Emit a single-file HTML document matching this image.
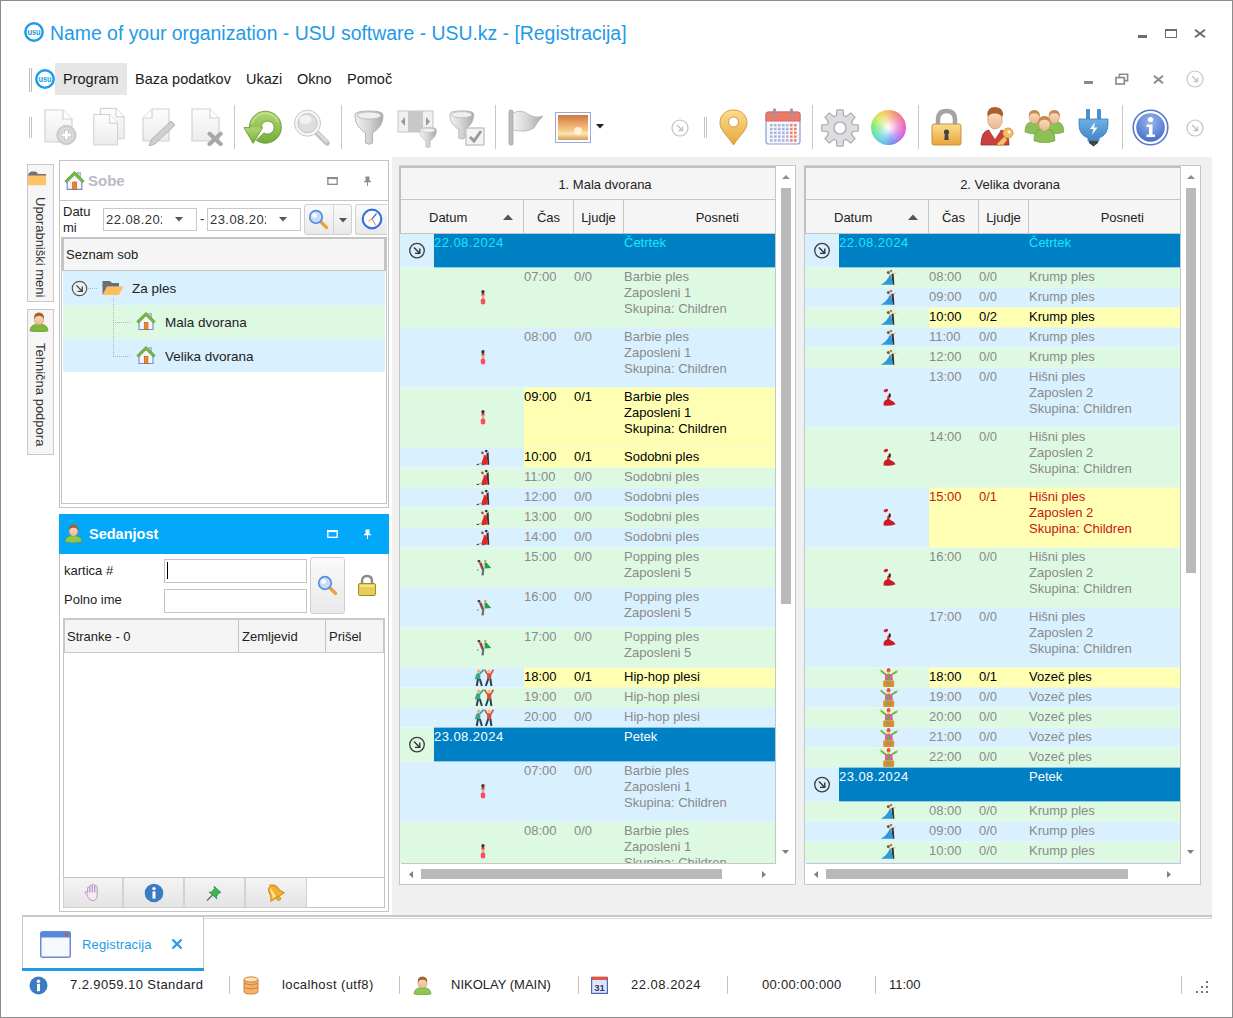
<!DOCTYPE html><html><head><meta charset="utf-8"><title>Registracija</title><style>
*{box-sizing:border-box;margin:0;padding:0}
html,body{width:1233px;height:1018px;overflow:hidden;background:#fff}
body{position:relative;font-family:"Liberation Sans",sans-serif;font-size:13px;color:#222;}
.a{position:absolute}
.t{position:absolute;white-space:nowrap;line-height:16px}
.frame{left:0;top:0;width:1233px;height:1018px;border:1px solid #8c8c8c}
.title{left:50px;top:21px;font-size:19.4px;line-height:24px;color:#1e9be6}
.menu{font-size:14.5px;line-height:18px;top:70px;color:#1a1a1a}
.sep{width:1px;background:#c9c9c9}
.hdr{background:#f5f5f5}
.gl{background:#c6c6c6}
.rowg{background:#def9e2}
.rowb{background:#d9f0ff}
.yel{background:#ffffb4}
.grp{background:#0080c4}
.gray{color:#8a8a8a}
.blk{color:#000}
.red{color:#c81414}
.cy{color:#19e6ff}
.wh{color:#fff}
</style></head><body>
<div class="a frame"></div>
<svg class="a" style="left:24px;top:22px" width="20" height="20" viewBox="0 0 20 20"><circle cx="10.0" cy="10.0" r="8.7" fill="#fff" stroke="#1e9be6" stroke-width="2.4"/><text x="10.0" y="12.6" font-family="Liberation Sans,sans-serif" font-size="8.8" font-weight="bold" fill="#1e9be6" text-anchor="middle" textLength="13.200000000000001" lengthAdjust="spacingAndGlyphs">usu</text></svg>
<div class="t title" style="left:50px;top:21px;">Name of your organization - USU software - USU.kz - [Registracija]</div>
<div class="a " style="left:1138px;top:35px;width:9px;height:3px;background:#6c6c6c"></div>
<div class="a " style="left:1165px;top:29px;width:12px;height:9px;border:1.6px solid #6c6c6c;border-top-width:2.4px"></div>
<svg class="a" style="left:1194px;top:29px" width="12" height="9" viewBox="0 0 12 9"><path d="M1 0.8 L11 8.2 M11 0.8 L1 8.2" stroke="#6c6c6c" stroke-width="2"/></svg>
<div class="a " style="left:29px;top:68px;width:1px;height:24px;background:#bdbdbd"></div>
<div class="a " style="left:31px;top:68px;width:1px;height:24px;background:#bdbdbd"></div>
<svg class="a" style="left:35px;top:69px" width="20" height="20" viewBox="0 0 20 20"><circle cx="10.0" cy="10.0" r="8.7" fill="#fff" stroke="#1e9be6" stroke-width="2.4"/><text x="10.0" y="12.6" font-family="Liberation Sans,sans-serif" font-size="8.8" font-weight="bold" fill="#1e9be6" text-anchor="middle" textLength="13.200000000000001" lengthAdjust="spacingAndGlyphs">usu</text></svg>
<div class="a " style="left:55px;top:63px;width:72px;height:32px;background:#e6e6e6"></div>
<div class="t menu" style="left:63px;top:70px;">Program</div>
<div class="t menu" style="left:135px;top:70px;">Baza podatkov</div>
<div class="t menu" style="left:246px;top:70px;">Ukazi</div>
<div class="t menu" style="left:297px;top:70px;">Okno</div>
<div class="t menu" style="left:347px;top:70px;">Pomoč</div>
<div class="a " style="left:1084px;top:81px;width:9px;height:3px;background:#8a8a8a"></div>
<svg class="a" style="left:1115px;top:73px" width="14" height="12" viewBox="0 0 14 12"><path d="M4.5 4 V1.2 H12.6 V7.6 H9.5" fill="none" stroke="#8a8a8a" stroke-width="1.6"/><rect x="0.9" y="4.6" width="8.4" height="6.4" fill="#fff" stroke="#8a8a8a" stroke-width="1.6"/></svg>
<svg class="a" style="left:1153px;top:75px" width="11" height="9" viewBox="0 0 11 9"><path d="M1 0.8 L10 8.2 M10 0.8 L1 8.2" stroke="#8a8a8a" stroke-width="1.9"/></svg>
<svg class="a" style="left:1186px;top:70px" width="18" height="18" viewBox="0 0 18 18"><circle cx="9" cy="9" r="8" fill="none" stroke="#c4c4c4" stroke-width="1.2"/><path d="M6 6 L11.5 11.5 M11.5 7.5 V11.5 H7.5" fill="none" stroke="#c4c4c4" stroke-width="1.3"/></svg>
<div class="a " style="left:29px;top:117px;width:1px;height:21px;background:#c4c4c4"></div>
<div class="a " style="left:31px;top:117px;width:1px;height:21px;background:#c4c4c4"></div>
<svg class="a" width="0" height="0" style="left:0;top:0"><defs>
<linearGradient id="gDoc" x1="0" y1="0" x2="0" y2="1"><stop offset="0" stop-color="#fdfdfd"/><stop offset="1" stop-color="#ececec"/></linearGradient>
<linearGradient id="gSil" x1="0" y1="0" x2="1" y2="0"><stop offset="0" stop-color="#f2f2f2"/><stop offset="0.5" stop-color="#d4d4d4"/><stop offset="1" stop-color="#a8a8a8"/></linearGradient>
<linearGradient id="gGreen" x1="0" y1="0" x2="0" y2="1"><stop offset="0" stop-color="#b2d874"/><stop offset="1" stop-color="#74ac38"/></linearGradient>
<linearGradient id="gGold" x1="0" y1="0" x2="0" y2="1"><stop offset="0" stop-color="#fbdc8e"/><stop offset="1" stop-color="#e8a63c"/></linearGradient>
<linearGradient id="gSun" x1="0" y1="0" x2="0" y2="1"><stop offset="0" stop-color="#d4783c"/><stop offset="0.6" stop-color="#f6c886"/><stop offset="0.75" stop-color="#fbe6b0"/><stop offset="1" stop-color="#d89a5c"/></linearGradient>
<radialGradient id="gInfo" cx="0.5" cy="0.3" r="0.8"><stop offset="0" stop-color="#9ab8ee"/><stop offset="1" stop-color="#3a62c4"/></radialGradient>
<linearGradient id="gBlue" x1="0" y1="0" x2="0" y2="1"><stop offset="0" stop-color="#6fb0e4"/><stop offset="1" stop-color="#3f86c6"/></linearGradient>
<radialGradient id="gWheelW" cx="0.5" cy="0.5" r="0.5"><stop offset="0" stop-color="#fff" stop-opacity="1"/><stop offset="0.55" stop-color="#fff" stop-opacity="0.35"/><stop offset="1" stop-color="#fff" stop-opacity="0"/></radialGradient>
<linearGradient id="gSkin" x1="0" y1="0" x2="0" y2="1"><stop offset="0" stop-color="#fbe0c4"/><stop offset="1" stop-color="#eab890"/></linearGradient>
</defs></svg>
<svg class="a" style="left:43px;top:109px" width="36" height="36" viewBox="0 0 36 36"><path d="M2 1 H20 L29 10 V33 H2 Z" fill="url(#gDoc)" stroke="#d2d2d2" stroke-width="1.2"/><path d="M20 1 V10 H29" fill="#fff" stroke="#d2d2d2" stroke-width="1.2"/><circle cx="23.4" cy="26" r="9.5" fill="#d2d2d2" stroke="#c0c0c0"/><circle cx="23.4" cy="26" r="7.4" fill="#dcdcdc"/><path d="M23.4 20.8 V31.2 M18.2 26 H28.6" stroke="#b8b8b8" stroke-width="4.4"/><path d="M23.4 21.4 V30.6 M18.8 26 H28" stroke="#fff" stroke-width="3"/></svg>
<svg class="a" style="left:92px;top:107px" width="34" height="39" viewBox="0 0 34 39"><g transform="translate(6.6,0.4) scale(0.88,0.95)"><path d="M2 1 H20 L29 10 V33 H2 Z" fill="url(#gDoc)" stroke="#d2d2d2" stroke-width="1.2"/><path d="M20 1 V10 H29" fill="#fff" stroke="#d2d2d2" stroke-width="1.2"/></g><g transform="translate(0,6.6) scale(0.88,0.95)"><path d="M2 1 H20 L29 10 V33 H2 Z" fill="url(#gDoc)" stroke="#d2d2d2" stroke-width="1.2"/><path d="M20 1 V10 H29" fill="#fff" stroke="#d2d2d2" stroke-width="1.2"/></g></svg>
<svg class="a" style="left:141px;top:108px" width="36" height="38" viewBox="0 0 36 38"><path d="M2 10 L11 1 H28 V33 H2 Z" fill="url(#gDoc)" stroke="#d2d2d2" stroke-width="1.2"/><path d="M11 1 V10 H2" fill="#fff" stroke="#d2d2d2" stroke-width="1.2"/><path d="M30 13 L34 17 L14 36 L8 38 L10 32 Z" fill="#cfcfcf" stroke="#b4b4b4" stroke-width="1"/></svg>
<svg class="a" style="left:190px;top:108px" width="36" height="38" viewBox="0 0 36 38"><path d="M2 1 H20 L29 10 V33 H2 Z" fill="url(#gDoc)" stroke="#d2d2d2" stroke-width="1.2"/><path d="M20 1 V10 H29" fill="#fff" stroke="#d2d2d2" stroke-width="1.2"/><path d="M19.6 25.8 L30.6 36 M30.6 25.8 L19.6 36" stroke="#a8a8a8" stroke-width="4.2" stroke-linecap="round"/></svg>
<div class="a sep" style="left:234px;top:105px;width:1px;height:44px;"></div>
<svg class="a" style="left:243px;top:110px" width="40" height="36" viewBox="0 0 40 36"><path d="M6.4 17.2 A16 16 0 1 1 13.2 30.3 L21 22.9 A6.5 6.5 0 1 0 18.2 17.6 Z" fill="url(#gGreen)" stroke="#6a9c38" stroke-width="0.9"/><path d="M9 14 A13.6 13.6 0 0 1 35 12" fill="none" stroke="#c8e498" stroke-width="1.6" opacity="0.8"/><path d="M0.9 17.6 H19.6 L10.1 33.4 Z" fill="url(#gGreen)" stroke="#6a9c38" stroke-width="0.9"/><path d="M7 17.4 H17.6" stroke="#a4cc64" stroke-width="1.5"/></svg>
<svg class="a" style="left:293px;top:109px" width="38" height="38" viewBox="0 0 38 38"><path d="M24 24 L34 34" stroke="#c2c2c2" stroke-width="5.4" stroke-linecap="round"/><path d="M24.5 23.5 L33.5 32.5" stroke="#e2e2e2" stroke-width="1.8" stroke-linecap="round"/><circle cx="14.5" cy="14.2" r="13" fill="#f7f7f7" stroke="#c8c8c8" stroke-width="1"/><circle cx="14.5" cy="14.2" r="9.6" fill="#dedede" stroke="#c2c2c2" stroke-width="1"/><ellipse cx="12.4" cy="10.6" rx="6" ry="4.4" fill="#f2f2f2"/></svg>
<div class="a sep" style="left:341px;top:105px;width:1px;height:44px;"></div>
<svg class="a" style="left:354px;top:110px" width="31" height="37" viewBox="0 0 31 37"><path d="M1 5 Q1 1 15 1 Q29 1 29 5 C29 15 24 19 18.5 23 V33 Q15 35.5 11.5 33 V23 C6 19 1 15 1 5 Z" fill="url(#gSil)" stroke="#b2b2b2" stroke-width="1"/><ellipse cx="15" cy="5.5" rx="12" ry="3.6" fill="#efefef" stroke="#bdbdbd"/></svg>
<svg class="a" style="left:397px;top:110px" width="42" height="38" viewBox="0 0 42 38"><rect x="1" y="1" width="35" height="21" fill="#f0f0f0" stroke="#c4c4c4"/><rect x="11" y="1" width="15" height="21" fill="#c8c8c8"/><path d="M8 7 V16 L4 11.5 Z M29 7 V16 L33 11.5 Z" fill="#9a9a9a"/><g transform="translate(22,17) scale(0.6)"><path d="M1 5 Q1 1 15 1 Q29 1 29 5 C29 15 24 19 18.5 23 V33 Q15 35.5 11.5 33 V23 C6 19 1 15 1 5 Z" fill="url(#gSil)" stroke="#b2b2b2" stroke-width="1"/><ellipse cx="15" cy="5.5" rx="12" ry="3.6" fill="#efefef" stroke="#bdbdbd"/></g></svg>
<svg class="a" style="left:449px;top:110px" width="38" height="38" viewBox="0 0 38 38"><g transform="scale(0.85)"><path d="M1 5 Q1 1 15 1 Q29 1 29 5 C29 15 24 19 18.5 23 V33 Q15 35.5 11.5 33 V23 C6 19 1 15 1 5 Z" fill="url(#gSil)" stroke="#b2b2b2" stroke-width="1"/><ellipse cx="15" cy="5.5" rx="12" ry="3.6" fill="#efefef" stroke="#bdbdbd"/></g><rect x="17" y="18" width="18" height="17" fill="#f4f4f4" stroke="#b9b9b9" stroke-width="1.2"/><path d="M21 27 L25 31 L32 21" fill="none" stroke="#9a9a9a" stroke-width="3"/></svg>
<div class="a sep" style="left:495px;top:105px;width:1px;height:44px;"></div>
<svg class="a" style="left:507px;top:109px" width="38" height="38" viewBox="0 0 38 38"><rect x="2" y="1" width="4" height="35" rx="1.5" fill="#bdbdbd" stroke="#a4a4a4" stroke-width="0.8"/><path d="M6 4 Q14 0 21 5 Q28 10 36 7 Q30 13 27 19 Q20 24 6 21 Z" fill="url(#gSil)" stroke="#b4b4b4" stroke-width="0.8"/></svg>
<svg class="a" style="left:555px;top:112px" width="36" height="31" viewBox="0 0 36 31"><rect x="0.5" y="0.5" width="35" height="30" fill="#fff" stroke="#9aa8d8"/><rect x="3" y="3" width="30" height="25" fill="url(#gSun)"/><circle cx="23" cy="19" r="4" fill="#fff6d8" opacity="0.9"/></svg>
<svg class="a" style="left:596px;top:124px" width="8" height="5" viewBox="0 0 8 5"><path d="M0 0 H8 L4 4.5 Z" fill="#222"/></svg>
<svg class="a" style="left:671px;top:119px" width="18" height="18" viewBox="0 0 18 18"><circle cx="9" cy="9" r="8" fill="none" stroke="#c0c0c0" stroke-width="1.2"/><path d="M6 6 L11.5 11.5 M11.5 7.5 V11.5 H7.5" fill="none" stroke="#c0c0c0" stroke-width="1.3"/></svg>
<div class="a " style="left:704px;top:117px;width:1px;height:21px;background:#c4c4c4"></div>
<div class="a " style="left:706px;top:117px;width:1px;height:21px;background:#c4c4c4"></div>
<svg class="a" style="left:719px;top:109px" width="30" height="37" viewBox="0 0 30 37"><path d="M14.5 1 C6 1 1 7 1 14 C1 21 8 26 14.5 36 C21 26 28 21 28 14 C28 7 23 1 14.5 1 Z" fill="url(#gGold)" stroke="#d69a3c" stroke-width="1"/><circle cx="14.5" cy="13" r="5" fill="#fff" stroke="#d69a3c"/></svg>
<svg class="a" style="left:765px;top:108px" width="36" height="38" viewBox="0 0 36 38"><rect x="1" y="4" width="34" height="32" rx="2.5" fill="#f7f8fc" stroke="#8d9bd0" stroke-width="1.2"/><path d="M1 13 V6.5 Q1 4 3.5 4 H32.5 Q35 4 35 6.5 V13 Z" fill="#ec7a6c" stroke="#d46a5c"/><rect x="8" y="0.5" width="3" height="8" rx="1" fill="#9a9a9a"/><rect x="25" y="0.5" width="3" height="8" rx="1" fill="#9a9a9a"/><rect x="5" y="16.0" width="2.6" height="2.4" fill="#a8b4dc"/><rect x="9" y="16.0" width="2.6" height="2.4" fill="#a8b4dc"/><rect x="13" y="16.0" width="2.6" height="2.4" fill="#a8b4dc"/><rect x="17" y="16.0" width="2.6" height="2.4" fill="#a8b4dc"/><rect x="21" y="16.0" width="2.6" height="2.4" fill="#a8b4dc"/><rect x="25" y="16.0" width="2.6" height="2.4" fill="#f08060"/><rect x="29" y="16.0" width="2.6" height="2.4" fill="#f08060"/><rect x="5" y="19.8" width="2.6" height="2.4" fill="#a8b4dc"/><rect x="9" y="19.8" width="2.6" height="2.4" fill="#a8b4dc"/><rect x="13" y="19.8" width="2.6" height="2.4" fill="#a8b4dc"/><rect x="17" y="19.8" width="2.6" height="2.4" fill="#a8b4dc"/><rect x="21" y="19.8" width="2.6" height="2.4" fill="#a8b4dc"/><rect x="25" y="19.8" width="2.6" height="2.4" fill="#f08060"/><rect x="29" y="19.8" width="2.6" height="2.4" fill="#f08060"/><rect x="5" y="23.6" width="2.6" height="2.4" fill="#a8b4dc"/><rect x="9" y="23.6" width="2.6" height="2.4" fill="#a8b4dc"/><rect x="13" y="23.6" width="2.6" height="2.4" fill="#a8b4dc"/><rect x="17" y="23.6" width="2.6" height="2.4" fill="#a8b4dc"/><rect x="21" y="23.6" width="2.6" height="2.4" fill="#a8b4dc"/><rect x="25" y="23.6" width="2.6" height="2.4" fill="#f08060"/><rect x="29" y="23.6" width="2.6" height="2.4" fill="#f08060"/><rect x="5" y="27.4" width="2.6" height="2.4" fill="#a8b4dc"/><rect x="9" y="27.4" width="2.6" height="2.4" fill="#a8b4dc"/><rect x="13" y="27.4" width="2.6" height="2.4" fill="#a8b4dc"/><rect x="17" y="27.4" width="2.6" height="2.4" fill="#a8b4dc"/><rect x="21" y="27.4" width="2.6" height="2.4" fill="#a8b4dc"/><rect x="25" y="27.4" width="2.6" height="2.4" fill="#f08060"/><rect x="29" y="27.4" width="2.6" height="2.4" fill="#f08060"/><rect x="5" y="31.2" width="2.6" height="2.4" fill="#a8b4dc"/><rect x="9" y="31.2" width="2.6" height="2.4" fill="#a8b4dc"/><rect x="13" y="31.2" width="2.6" height="2.4" fill="#a8b4dc"/><rect x="17" y="31.2" width="2.6" height="2.4" fill="#a8b4dc"/><rect x="21" y="31.2" width="2.6" height="2.4" fill="#a8b4dc"/><rect x="25" y="31.2" width="2.6" height="2.4" fill="#f08060"/><rect x="29" y="31.2" width="2.6" height="2.4" fill="#f08060"/></svg>
<div class="a sep" style="left:812px;top:105px;width:1px;height:44px;"></div>
<svg class="a" style="left:821px;top:109px" width="38" height="38" viewBox="0 0 38 38"><polygon points="31.7,15.5 37.2,15.9 37.2,22.1 31.7,22.5 30.5,25.5 34.1,29.7 29.7,34.1 25.5,30.5 22.5,31.7 22.1,37.2 15.9,37.2 15.5,31.7 12.5,30.5 8.3,34.1 3.9,29.7 7.5,25.5 6.3,22.5 0.8,22.1 0.8,15.9 6.3,15.5 7.5,12.5 3.9,8.3 8.3,3.9 12.5,7.5 15.5,6.3 15.9,0.8 22.1,0.8 22.5,6.3 25.5,7.5 29.7,3.9 34.1,8.3 30.5,12.5" fill="#dcdce0" stroke="#acacb2" stroke-width="1.2" stroke-linejoin="round"/><circle cx="19" cy="19" r="6" fill="#fff" stroke="#a6a6ac" stroke-width="1.2"/></svg>
<div class="a" style="left:871px;top:110px;width:35px;height:35px;border-radius:50%;background:conic-gradient(from 60deg,#f06aa0,#e85ac8,#b46ae8,#6a8cf0,#5ac8e8,#5ae0b0,#7ae86a,#d4e85a,#f0c85a,#f08a6a,#f06aa0)"></div>
<svg class="a" style="left:871px;top:110px" width="35" height="35" viewBox="0 0 35 35"><circle cx="17.5" cy="17.5" r="17.5" fill="url(#gWheelW)"/></svg>
<div class="a sep" style="left:918px;top:105px;width:1px;height:44px;"></div>
<svg class="a" style="left:931px;top:108px" width="32" height="38" viewBox="0 0 32 38"><path d="M7 18 V12 Q7 3 15.5 3 Q24 3 24 12 V18" fill="none" stroke="#a4a4a8" stroke-width="4.5"/><rect x="1" y="16" width="29" height="21" rx="2" fill="url(#gGold)" stroke="#c8903c"/><circle cx="15.5" cy="24" r="2.6" fill="#444"/><path d="M14 25 L13.3 32 H17.7 L17 25 Z" fill="#444"/></svg>
<svg class="a" style="left:978px;top:107px" width="38" height="40" viewBox="0 0 38 40"><path d="M3 38 Q3 24 11 23 L17 30 L23 23 Q31 24 31 38 Z" fill="#c84040" stroke="#983030" stroke-width="0.8"/><path d="M11 23 L17 32 L23 23 L17 27 Z" fill="#fff"/><path d="M9 9 Q9 0 17 0 Q26 0 25 10 Q24 5 17 5 Q10 5 9 9 Z" fill="#a8602c"/><ellipse cx="17" cy="13" rx="7.2" ry="9" fill="url(#gSkin)" stroke="#c8946a" stroke-width="0.7"/><path d="M9.5 10 Q10 2 17 2 Q24 2 24.5 10 Q21 6 17 6.5 Q12 6 9.5 10 Z" fill="#a8602c"/><circle cx="30" cy="26" r="5" fill="#f4c060" stroke="#d69a3c"/><circle cx="31" cy="25" r="1.5" fill="#fff"/><path d="M26.5 29.5 L19 37 L21 39 L23 37 L24.5 38.5 L29 33" fill="#f4c060" stroke="#d69a3c" stroke-width="0.8"/></svg>
<svg class="a" style="left:1024px;top:110px" width="42" height="34" viewBox="0 0 42 34"><g transform="translate(1,0) scale(0.85)"><path d="M0 26 Q0 15 7 14 H15 Q22 15 22 26 Q11 30 0 26 Z" fill="#8cc054" stroke="#6a9a3c" stroke-width="0.8"/><ellipse cx="11" cy="8.5" rx="6" ry="7.5" fill="url(#gSkin)" stroke="#c8946a" stroke-width="0.7"/><path d="M4.5 8 Q4 0 11 0 Q18 0 17.5 8 Q15 3.5 11 4 Q7 3.5 4.5 8 Z" fill="#c88a4c"/></g><g transform="translate(21,0) scale(0.85)"><path d="M0 26 Q0 15 7 14 H15 Q22 15 22 26 Q11 30 0 26 Z" fill="#8cc054" stroke="#6a9a3c" stroke-width="0.8"/><ellipse cx="11" cy="8.5" rx="6" ry="7.5" fill="url(#gSkin)" stroke="#c8946a" stroke-width="0.7"/><path d="M4.5 8 Q4 0 11 0 Q18 0 17.5 8 Q15 3.5 11 4 Q7 3.5 4.5 8 Z" fill="#c88a4c"/></g><g transform="translate(10,6) scale(0.95)"><path d="M0 26 Q0 15 7 14 H15 Q22 15 22 26 Q11 30 0 26 Z" fill="#8cc054" stroke="#6a9a3c" stroke-width="0.8"/><ellipse cx="11" cy="8.5" rx="6" ry="7.5" fill="url(#gSkin)" stroke="#c8946a" stroke-width="0.7"/><path d="M4.5 8 Q4 0 11 0 Q18 0 17.5 8 Q15 3.5 11 4 Q7 3.5 4.5 8 Z" fill="#c88a4c"/></g></svg>
<svg class="a" style="left:1078px;top:108px" width="32" height="40" viewBox="0 0 32 40"><rect x="8" y="1" width="4" height="12" rx="1" fill="#4a90cc"/><rect x="19" y="1" width="4" height="12" rx="1" fill="#4a90cc"/><path d="M1 11 H30 V16 Q30 27 21 30 V33 H10 V30 Q1 27 1 16 Z" fill="url(#gBlue)" stroke="#3a78b4" stroke-width="0.8"/><path d="M17 14 L12 21 H15.5 L14 27 L19.5 19.5 H16 Z" fill="#fff"/><path d="M11 33 H20 V35 L15.5 38.5 L11 35 Z" fill="#444"/></svg>
<div class="a sep" style="left:1122px;top:105px;width:1px;height:44px;"></div>
<svg class="a" style="left:1132px;top:109px" width="37" height="37" viewBox="0 0 37 37"><circle cx="18.5" cy="18.5" r="17.3" fill="#fff" stroke="#5a78c8" stroke-width="1.6"/><circle cx="18.5" cy="18.5" r="14.3" fill="url(#gInfo)"/><circle cx="18.5" cy="10.5" r="2.6" fill="#fff"/><path d="M14.5 15.5 H20.5 V25.5 H23 V28 H14.5 V25.5 H17 V18 H14.5 Z" fill="#fff"/></svg>
<svg class="a" style="left:1186px;top:119px" width="18" height="18" viewBox="0 0 18 18"><circle cx="9" cy="9" r="8" fill="none" stroke="#c0c0c0" stroke-width="1.2"/><path d="M6 6 L11.5 11.5 M11.5 7.5 V11.5 H7.5" fill="none" stroke="#c0c0c0" stroke-width="1.3"/></svg>
<div class="a " style="left:27px;top:164px;width:27px;height:138px;background:#f6f6f6;border:1px solid #c8c8c8"></div>
<div class="t" style="left:49px;top:197px;transform-origin:0 0;transform:rotate(90deg);font-size:13px;line-height:18px;color:#333">Uporabniški meni</div>
<svg class="a" style="left:28px;top:171px" width="19" height="15" viewBox="0 0 19 15"><path d="M0 4 Q1 0.5 4 0.5 H7 Q9 0.5 10 3 H18 V6 H0 Z" fill="#737373"/><rect x="0" y="4.5" width="18" height="9.8" fill="#ffc266"/></svg>
<div class="a " style="left:27px;top:309px;width:27px;height:146px;background:#f6f6f6;border:1px solid #c8c8c8"></div>
<div class="t" style="left:49px;top:343px;transform-origin:0 0;transform:rotate(90deg);font-size:13px;line-height:18px;color:#333">Tehnična podpora</div>
<svg class="a" style="left:29px;top:312px" width="20" height="20" viewBox="0 0 20 20"><path d="M1 19 Q1 12 10 12 Q19 12 19 19 Q10 21 1 19 Z" fill="#7cb83c" stroke="#5a9028" stroke-width="0.6"/><ellipse cx="10" cy="7.5" rx="4.6" ry="5.6" fill="url(#gSkin)" stroke="#c08a5a" stroke-width="0.6"/><path d="M5 7 Q4.5 0.5 10 0.5 Q15.5 0.5 15 7 Q13 3.5 10 4 Q7 3.5 5 7 Z" fill="#a8602c"/></svg>
<div class="a " style="left:59px;top:160px;width:330px;height:348px;background:#fff;border:1px solid #c4c4c4"></div>
<div class="a " style="left:60px;top:200px;width:328px;height:1px;background:#c4c4c4"></div>
<svg class="a" style="left:64px;top:170px" width="21" height="21" viewBox="0 0 20 20"><path d="M3 9 V18.5 H17 V9 L10 3 Z" fill="#f4f4fa" stroke="#7a88c8" stroke-width="1.1"/><rect x="13" y="2.5" width="2.6" height="5" fill="#c8cce4" stroke="#8a96c8" stroke-width="0.6"/><rect x="8.3" y="11.5" width="3.6" height="7" fill="#e8892c" stroke="#b46414" stroke-width="0.7"/><path d="M0.8 10.6 L10 1.4 L19.2 10.6 L17.4 12 L10 4.8 L2.6 12 Z" fill="#74bc3c" stroke="#4f9424" stroke-width="0.7"/></svg>
<div class="t " style="left:88px;top:172px;font-weight:bold;font-size:15px;line-height:18px;color:#b9bcc6">Sobe</div>
<svg class="a" style="left:327px;top:177px" width="11" height="8" viewBox="0 0 12 9"><rect x="0.75" y="0.75" width="10.5" height="7.5" fill="none" stroke="#8c8c8c" stroke-width="1.5"/><rect x="0" y="0" width="12" height="2.4" fill="#8c8c8c"/></svg>
<svg class="a" style="left:363px;top:176px" width="9" height="11" viewBox="0 0 9 11"><path d="M2.5 0.5 H6.5 V5 H8 V6.2 H5 V10 H4 V6.2 H1 V5 H2.5 Z" fill="#8c8c8c"/></svg>
<div class="t " style="left:63px;top:204px;line-height:15px">Datu</div>
<div class="t " style="left:63px;top:220px;line-height:15px">mi</div>
<div class="a " style="left:103px;top:208px;width:94px;height:23px;background:#fff;border:1px solid #c9c9c9"></div>
<div class="a" style="left:106px;top:211px;width:56px;height:18px;overflow:hidden"><div class="t" style="left:0;top:1px;color:#333;letter-spacing:0.45px">22.08.2024</div></div>
<svg class="a" style="left:175px;top:217px" width="8" height="5" viewBox="0 0 8 5"><path d="M0 0 H8 L4 4.5 Z" fill="#555"/></svg>
<div class="t " style="left:200px;top:211px;">-</div>
<div class="a " style="left:207px;top:208px;width:94px;height:23px;background:#fff;border:1px solid #c9c9c9"></div>
<div class="a" style="left:210px;top:211px;width:56px;height:18px;overflow:hidden"><div class="t" style="left:0;top:1px;color:#333;letter-spacing:0.45px">23.08.2024</div></div>
<svg class="a" style="left:279px;top:217px" width="8" height="5" viewBox="0 0 8 5"><path d="M0 0 H8 L4 4.5 Z" fill="#555"/></svg>
<div class="a " style="left:304px;top:204px;width:48px;height:31px;background:linear-gradient(#fafafa,#e9e9e9);border:1px solid #d0d0d0;border-radius:3px"></div>
<div class="a " style="left:333px;top:205px;width:1px;height:29px;background:#d4d4d4"></div>
<svg class="a" style="left:308px;top:209px" width="21" height="21" viewBox="0 0 21 21"><path d="M12 12 L18.5 18.5" stroke="#e8a43c" stroke-width="3.4" stroke-linecap="round"/><circle cx="8" cy="8" r="6.3" fill="#c4dcfa" stroke="#5a8ce0" stroke-width="1.7"/><circle cx="6.5" cy="6.3" r="2.6" fill="#fff" opacity="0.8"/></svg>
<svg class="a" style="left:339px;top:218px" width="8" height="5" viewBox="0 0 8 5"><path d="M0 0 H8 L4 4.5 Z" fill="#555"/></svg>
<div class="a " style="left:355px;top:204px;width:32px;height:31px;background:linear-gradient(#fafafa,#e9e9e9);border:1px solid #d0d0d0;border-radius:3px;border-right:none;border-radius:3px 0 0 3px"></div>
<svg class="a" style="left:361px;top:208px" width="22" height="22" viewBox="0 0 22 22"><circle cx="11" cy="11" r="9.3" fill="#fff" stroke="#3a72d8" stroke-width="2.2"/><path d="M11 11 L15.5 5.5" stroke="#3a72d8" stroke-width="1.2"/><path d="M11 11 L14.5 17 M11 11 L7.5 13" stroke="#e87a5a" stroke-width="1"/></svg>
<div class="a " style="left:61px;top:237px;width:326px;height:267px;background:#fff;border:1px solid #c4c4c4"></div>
<div class="a " style="left:62px;top:238px;width:324px;height:33px;background:#f5f5f5;border:1px solid #c4c4c4;border-width:1px 2px 1px 2px"></div>
<div class="t " style="left:66px;top:247px;">Seznam sob</div>
<div class="a rowb" style="left:63px;top:271px;width:322px;height:34px;"></div>
<div class="a rowg" style="left:63px;top:305px;width:322px;height:34px;"></div>
<div class="a rowb" style="left:63px;top:339px;width:322px;height:33px;"></div>
<svg class="a" style="left:71px;top:280px" width="17" height="17" viewBox="0 0 17 17"><circle cx="8.5" cy="8.5" r="7.2" fill="#e8f4fc" stroke="#555" stroke-width="1.2"/><path d="M5.4 5.4 L11 11 M11.3 6.6 V11.3 H6.6" fill="none" stroke="#444" stroke-width="1.3"/></svg>
<svg class="a" style="left:102px;top:280px" width="22" height="16" viewBox="0 0 22 16"><path d="M0.5 1 H8 L10 3 H17 V6 H0.5 Z" fill="#6e6e6e"/><path d="M0.5 5 V15 H17 L21.5 6.5 H5 L0.5 15" fill="#ffbe5c"/><path d="M0.5 5 V15 L5 6.5 H17 V5 Z" fill="#6e6e6e"/></svg>
<div class="t " style="left:132px;top:281px;font-size:13.5px">Za ples</div>
<svg class="a" style="left:136px;top:311px" width="20" height="20" viewBox="0 0 20 20"><path d="M3 9 V18.5 H17 V9 L10 3 Z" fill="#f4f4fa" stroke="#7a88c8" stroke-width="1.1"/><rect x="13" y="2.5" width="2.6" height="5" fill="#c8cce4" stroke="#8a96c8" stroke-width="0.6"/><rect x="8.3" y="11.5" width="3.6" height="7" fill="#e8892c" stroke="#b46414" stroke-width="0.7"/><path d="M0.8 10.6 L10 1.4 L19.2 10.6 L17.4 12 L10 4.8 L2.6 12 Z" fill="#74bc3c" stroke="#4f9424" stroke-width="0.7"/></svg>
<div class="t " style="left:165px;top:315px;font-size:13.5px">Mala dvorana</div>
<svg class="a" style="left:136px;top:345px" width="20" height="20" viewBox="0 0 20 20"><path d="M3 9 V18.5 H17 V9 L10 3 Z" fill="#f4f4fa" stroke="#7a88c8" stroke-width="1.1"/><rect x="13" y="2.5" width="2.6" height="5" fill="#c8cce4" stroke="#8a96c8" stroke-width="0.6"/><rect x="8.3" y="11.5" width="3.6" height="7" fill="#e8892c" stroke="#b46414" stroke-width="0.7"/><path d="M0.8 10.6 L10 1.4 L19.2 10.6 L17.4 12 L10 4.8 L2.6 12 Z" fill="#74bc3c" stroke="#4f9424" stroke-width="0.7"/></svg>
<div class="t " style="left:165px;top:349px;font-size:13.5px">Velika dvorana</div>
<div class="a " style="left:88px;top:288px;width:10px;height:1px;background:repeating-linear-gradient(90deg,#b4b4b4 0 1px,transparent 1px 2px)"></div>
<div class="a " style="left:113px;top:298px;width:1px;height:58px;background:repeating-linear-gradient(180deg,#b4b4b4 0 1px,transparent 1px 2px)"></div>
<div class="a " style="left:113px;top:322px;width:18px;height:1px;background:repeating-linear-gradient(90deg,#b4b4b4 0 1px,transparent 1px 2px)"></div>
<div class="a " style="left:113px;top:356px;width:18px;height:1px;background:repeating-linear-gradient(90deg,#b4b4b4 0 1px,transparent 1px 2px)"></div>
<div class="a " style="left:59px;top:514px;width:330px;height:398px;background:#fff;border:1px solid #c4c4c4"></div>
<div class="a " style="left:59px;top:514px;width:330px;height:40px;background:#04a8fb"></div>
<svg class="a" style="left:64px;top:524px" width="19" height="19" viewBox="0 0 19 19"><path d="M1 18 Q1 11.5 9.5 11.5 Q18 11.5 18 18 Q9.5 20 1 18 Z" fill="#8cc84c" stroke="#5a9028" stroke-width="0.6"/><ellipse cx="9.5" cy="7" rx="4.4" ry="5.4" fill="url(#gSkin)" stroke="#c08a5a" stroke-width="0.6"/><path d="M4.8 6.5 Q4.3 0.5 9.5 0.5 Q14.7 0.5 14.2 6.5 Q12.5 3.3 9.5 3.8 Q6.5 3.3 4.8 6.5 Z" fill="#a8602c"/></svg>
<div class="t " style="left:89px;top:525px;font-weight:bold;font-size:14.5px;line-height:18px;color:#fff">Sedanjost</div>
<svg class="a" style="left:327px;top:530px" width="11" height="8" viewBox="0 0 12 9"><rect x="0.75" y="0.75" width="10.5" height="7.5" fill="none" stroke="#fff" stroke-width="1.5"/><rect x="0" y="0" width="12" height="2.4" fill="#fff"/></svg>
<svg class="a" style="left:363px;top:529px" width="9" height="11" viewBox="0 0 9 11"><path d="M2.5 0.5 H6.5 V5 H8 V6.2 H5 V10 H4 V6.2 H1 V5 H2.5 Z" fill="#fff"/></svg>
<div class="t " style="left:64px;top:563px;">kartica #</div>
<div class="t " style="left:64px;top:592px;">Polno ime</div>
<div class="a " style="left:164px;top:559px;width:143px;height:24px;background:#fff;border:1px solid #c4c4c4"></div>
<div class="a " style="left:167px;top:562px;width:1px;height:17px;background:#000"></div>
<div class="a " style="left:164px;top:589px;width:143px;height:24px;background:#fff;border:1px solid #c4c4c4"></div>
<div class="a " style="left:310px;top:557px;width:35px;height:57px;background:linear-gradient(#fafafa,#e9e9e9);border:1px solid #d0d0d0;border-radius:3px"></div>
<svg class="a" style="left:317px;top:575px" width="21" height="21" viewBox="0 0 21 21"><path d="M12 12 L18.5 18.5" stroke="#e8a43c" stroke-width="3.4" stroke-linecap="round"/><circle cx="8" cy="8" r="6.3" fill="#c4dcfa" stroke="#5a8ce0" stroke-width="1.7"/><circle cx="6.5" cy="6.3" r="2.6" fill="#fff" opacity="0.8"/></svg>
<svg class="a" style="left:357px;top:574px" width="20" height="22" viewBox="0 0 20 22"><path d="M5 10 V7 Q5 2 10 2 Q15 2 15 7 V10" fill="none" stroke="#8a8a8a" stroke-width="2.4"/><rect x="1.5" y="9.5" width="17" height="12" rx="1.5" fill="#e8cc5a" stroke="#a88a24"/><path d="M3 12 H17" stroke="#f8ec9a" stroke-width="1.6"/></svg>
<div class="a " style="left:63px;top:618px;width:322px;height:260px;background:#fff;border:1px solid #c4c4c4"></div>
<div class="a " style="left:63px;top:618px;width:322px;height:35px;background:#f5f5f5;border:2px solid #c8c8c8;border-bottom-width:1px"></div>
<div class="a " style="left:238px;top:620px;width:1px;height:32px;background:#c4c4c4"></div>
<div class="a " style="left:325px;top:620px;width:1px;height:32px;background:#c4c4c4"></div>
<div class="t " style="left:67px;top:629px;">Stranke - 0</div>
<div class="t " style="left:242px;top:629px;">Zemljevid</div>
<div class="t " style="left:329px;top:629px;">Prišel</div>
<div class="a " style="left:63px;top:878px;width:322px;height:30px;background:#fff;border:1px solid #c4c4c4;border-top:none"></div>
<div class="a " style="left:63px;top:878px;width:60px;height:30px;background:linear-gradient(#f4f4f4,#e4e4e4);border:1px solid #d2d2d2;border-top:none;border-radius:0 0 3px 3px"></div>
<div class="a " style="left:123px;top:878px;width:61px;height:30px;background:linear-gradient(#f4f4f4,#e4e4e4);border:1px solid #d2d2d2;border-top:none;border-radius:0 0 3px 3px"></div>
<div class="a " style="left:184px;top:878px;width:61px;height:30px;background:linear-gradient(#f4f4f4,#e4e4e4);border:1px solid #d2d2d2;border-top:none;border-radius:0 0 3px 3px"></div>
<div class="a " style="left:245px;top:878px;width:62px;height:30px;background:linear-gradient(#f4f4f4,#e4e4e4);border:1px solid #d2d2d2;border-top:none;border-radius:0 0 3px 3px"></div>
<svg class="a" style="left:84px;top:883px" width="16" height="19" viewBox="0 0 16 19"><g fill="#f6e8f4" stroke="#a888b4" stroke-width="0.8"><rect x="3.6" y="4" width="2.3" height="8" rx="1.1"/><rect x="6" y="2" width="2.3" height="9" rx="1.1"/><rect x="8.4" y="1.4" width="2.3" height="9" rx="1.1"/><rect x="10.8" y="2.8" width="2.3" height="8.4" rx="1.1"/><path d="M3.6 9.6 H13.1 V12.4 Q13.1 17.6 8.6 17.6 Q5.2 17.6 3.6 13.6 Z"/><path d="M3.9 13.2 L1.3 10 Q0.7 8.8 1.9 8.4 L4.1 10.6" /></g><rect x="4.1" y="9.2" width="8.5" height="2.4" fill="#f6e8f4"/></svg>
<svg class="a" style="left:144px;top:883px" width="20" height="20" viewBox="0 0 20 20"><circle cx="10" cy="10" r="9.3" fill="#3a7cc4"/><circle cx="10" cy="5.6" r="1.7" fill="#fff"/><rect x="8.5" y="8.4" width="3" height="7.2" fill="#fff"/></svg>
<svg class="a" style="left:205px;top:884px" width="18" height="18" viewBox="0 0 18 18"><path d="M2 16.5 L8 10.5" stroke="#666" stroke-width="1.2"/><path d="M9 2 L16 8.5 L14 9 L11.5 12.5 L12 15 L4 8 L6.5 8 L9.5 4.5 Z" fill="#3cb454" stroke="#28883a" stroke-width="0.7"/></svg>
<svg class="a" style="left:264px;top:882px" width="23" height="23" viewBox="0 0 23 23"><g transform="rotate(-32 11.5 11.5)"><path d="M11.5 2.4 C7.2 2.4 6.4 6.6 6.2 11 L3.6 15.6 H19.4 L16.8 11 C16.6 6.6 15.8 2.4 11.5 2.4 Z" fill="#f2b02c" stroke="#c8881c" stroke-width="0.9"/><path d="M10.4 4 C8.4 4.6 8 8 7.8 11.4 L6.4 14.2 H10.4 Z" fill="#fce28e"/><circle cx="11.5" cy="17.4" r="2" fill="#f2b02c" stroke="#c8881c" stroke-width="0.8"/><circle cx="11.5" cy="1.8" r="1.1" fill="#e8a020"/></g></svg>
<div class="a " style="left:392px;top:157px;width:820px;height:758px;background:#f0f0f0"></div>
<div class="a " style="left:399px;top:165px;width:397px;height:720px;background:#fff;border:1px solid #c6c6c6"></div>
<div class="a " style="left:399px;top:165px;width:377px;height:1px;background:#d4d4d4"></div>
<div class="a " style="left:399px;top:166px;width:377px;height:2px;background:#c0c0c0"></div>
<div class="a " style="left:399px;top:166px;width:2px;height:68px;background:#c0c0c0"></div>
<div class="a " style="left:399px;top:234px;width:1px;height:630px;background:#c6c6c6"></div>
<div class="a " style="left:775px;top:166px;width:1px;height:698px;background:#c6c6c6"></div>
<div class="a hdr" style="left:401px;top:168px;width:374px;height:31px;"></div>
<div class="a gl" style="left:401px;top:199px;width:374px;height:1px;"></div>
<div class="a hdr" style="left:401px;top:200px;width:374px;height:33px;"></div>
<div class="a gl" style="left:401px;top:233px;width:374px;height:1px;"></div>
<div class="a gl" style="left:523px;top:200px;width:1px;height:33px;"></div>
<div class="a gl" style="left:573px;top:200px;width:1px;height:33px;"></div>
<div class="a gl" style="left:623px;top:200px;width:1px;height:33px;"></div>
<div class="t" style="left:505px;width:200px;top:176.5px;text-align:center;color:#222">1. Mala dvorana</div>
<div class="t " style="left:429px;top:210px;">Datum</div>
<svg class="a" style="left:503px;top:214px" width="10" height="7" viewBox="0 0 10 7"><path d="M0 6 L5 0.5 L10 6 Z" fill="#555"/></svg>
<div class="t" style="left:524px;width:49px;top:210px;text-align:center">Čas</div>
<div class="t" style="left:574px;width:49px;top:210px;text-align:center">Ljudje</div>
<div class="t" style="left:624px;width:151px;top:210px;text-align:right;padding-right:36px">Posneti</div>
<div class="a" style="left:400px;top:234px;width:375px;height:629px;overflow:hidden"><div class="a" style="left:0;top:-1px;width:375px;height:640px;transform:translateY(0.6px)">
<div class="a rowb" style="left:0px;top:0px;width:375px;height:34px;"></div>
<div class="a grp" style="left:34px;top:0px;width:341px;height:34px;"></div>
<div class="t cy" style="left:34px;top:1.4px;letter-spacing:0.45px">22.08.2024</div>
<div class="t cy" style="left:224px;top:1.4px;">Četrtek</div>
<svg class="a" style="left:8px;top:7.5px" width="18" height="18" viewBox="0 0 18 18"><circle cx="9" cy="9" r="7.3" fill="none" stroke="#3c3c3c" stroke-width="1.3"/><path d="M6 6 L11.6 11.6 M11.8 7 V11.8 H7" fill="none" stroke="#333" stroke-width="1.4"/></svg>
<div class="a rowg" style="left:0px;top:34px;width:375px;height:60px;"></div>
<svg class="a" style="left:76px;top:56px" width="16" height="16" viewBox="0 0 16 16"><ellipse cx="7" cy="2.3" rx="1.7" ry="2" fill="#4a3028"/><path d="M8.3 4.6 L9.4 1" stroke="#f0c0a8" stroke-width="0.9"/><rect x="5.4" y="4.4" width="3.2" height="1.7" fill="#e84848"/><rect x="5.9" y="6" width="2.4" height="3.2" fill="#e8a888"/><rect x="4.8" y="9" width="4.4" height="5.8" rx="1.6" fill="#f85060"/><rect x="6" y="14.6" width="2" height="1.4" fill="#f0c8b8"/></svg>
<div class="t gray" style="left:124px;top:35.4px;">07:00</div>
<div class="t gray" style="left:174px;top:35.4px;">0/0</div>
<div class="t gray" style="left:224px;top:35.4px;">Barbie ples</div>
<div class="t gray" style="left:224px;top:51.4px;">Zaposleni 1</div>
<div class="t gray" style="left:224px;top:67.4px;">Skupina: Children</div>
<div class="a rowb" style="left:0px;top:94px;width:375px;height:60px;"></div>
<svg class="a" style="left:76px;top:116px" width="16" height="16" viewBox="0 0 16 16"><ellipse cx="7" cy="2.3" rx="1.7" ry="2" fill="#4a3028"/><path d="M8.3 4.6 L9.4 1" stroke="#f0c0a8" stroke-width="0.9"/><rect x="5.4" y="4.4" width="3.2" height="1.7" fill="#e84848"/><rect x="5.9" y="6" width="2.4" height="3.2" fill="#e8a888"/><rect x="4.8" y="9" width="4.4" height="5.8" rx="1.6" fill="#f85060"/><rect x="6" y="14.6" width="2" height="1.4" fill="#f0c8b8"/></svg>
<div class="t gray" style="left:124px;top:95.4px;">08:00</div>
<div class="t gray" style="left:174px;top:95.4px;">0/0</div>
<div class="t gray" style="left:224px;top:95.4px;">Barbie ples</div>
<div class="t gray" style="left:224px;top:111.4px;">Zaposleni 1</div>
<div class="t gray" style="left:224px;top:127.4px;">Skupina: Children</div>
<div class="a rowg" style="left:0px;top:154px;width:375px;height:60px;"></div>
<div class="a yel" style="left:124px;top:154px;width:251px;height:60px;"></div>
<svg class="a" style="left:76px;top:176px" width="16" height="16" viewBox="0 0 16 16"><ellipse cx="7" cy="2.3" rx="1.7" ry="2" fill="#4a3028"/><path d="M8.3 4.6 L9.4 1" stroke="#f0c0a8" stroke-width="0.9"/><rect x="5.4" y="4.4" width="3.2" height="1.7" fill="#e84848"/><rect x="5.9" y="6" width="2.4" height="3.2" fill="#e8a888"/><rect x="4.8" y="9" width="4.4" height="5.8" rx="1.6" fill="#f85060"/><rect x="6" y="14.6" width="2" height="1.4" fill="#f0c8b8"/></svg>
<div class="t blk" style="left:124px;top:155.4px;">09:00</div>
<div class="t blk" style="left:174px;top:155.4px;">0/1</div>
<div class="t blk" style="left:224px;top:155.4px;">Barbie ples</div>
<div class="t blk" style="left:224px;top:171.4px;">Zaposleni 1</div>
<div class="t blk" style="left:224px;top:187.4px;">Skupina: Children</div>
<div class="a rowb" style="left:0px;top:214px;width:375px;height:20px;"></div>
<div class="a yel" style="left:124px;top:214px;width:251px;height:20px;"></div>
<svg class="a" style="left:76px;top:216px" width="16" height="16" viewBox="0 0 16 16"><path d="M5.6 13.6 L1 14.8" stroke="#c8a8a0" stroke-width="1"/><circle cx="6.4" cy="3.2" r="1.4" fill="#9a5a3a"/><path d="M7 4.6 L9 6.5" stroke="#e8b8a0" stroke-width="1.6"/><path d="M12 1.3 L12.6 4.6" stroke="#d4d4cc" stroke-width="1.8"/><circle cx="10.2" cy="1.4" r="1.3" fill="#3a3030"/><path d="M10.4 3.4 L12.6 3 L13.3 15.2 H11.6 Z" fill="#3a3434"/><path d="M8 6 L10.6 5.4 L11.8 15 L7 15.3 L5.4 13.6 Z" fill="#e02828"/><path d="M0.6 15 H3 M5.6 15.2 H8" stroke="#444" stroke-width="1"/></svg>
<div class="t blk" style="left:124px;top:215.4px;">10:00</div>
<div class="t blk" style="left:174px;top:215.4px;">0/1</div>
<div class="t blk" style="left:224px;top:215.4px;">Sodobni ples</div>
<div class="a rowg" style="left:0px;top:234px;width:375px;height:20px;"></div>
<svg class="a" style="left:76px;top:236px" width="16" height="16" viewBox="0 0 16 16"><path d="M5.6 13.6 L1 14.8" stroke="#c8a8a0" stroke-width="1"/><circle cx="6.4" cy="3.2" r="1.4" fill="#9a5a3a"/><path d="M7 4.6 L9 6.5" stroke="#e8b8a0" stroke-width="1.6"/><path d="M12 1.3 L12.6 4.6" stroke="#d4d4cc" stroke-width="1.8"/><circle cx="10.2" cy="1.4" r="1.3" fill="#3a3030"/><path d="M10.4 3.4 L12.6 3 L13.3 15.2 H11.6 Z" fill="#3a3434"/><path d="M8 6 L10.6 5.4 L11.8 15 L7 15.3 L5.4 13.6 Z" fill="#e02828"/><path d="M0.6 15 H3 M5.6 15.2 H8" stroke="#444" stroke-width="1"/></svg>
<div class="t gray" style="left:124px;top:235.4px;">11:00</div>
<div class="t gray" style="left:174px;top:235.4px;">0/0</div>
<div class="t gray" style="left:224px;top:235.4px;">Sodobni ples</div>
<div class="a rowb" style="left:0px;top:254px;width:375px;height:20px;"></div>
<svg class="a" style="left:76px;top:256px" width="16" height="16" viewBox="0 0 16 16"><path d="M5.6 13.6 L1 14.8" stroke="#c8a8a0" stroke-width="1"/><circle cx="6.4" cy="3.2" r="1.4" fill="#9a5a3a"/><path d="M7 4.6 L9 6.5" stroke="#e8b8a0" stroke-width="1.6"/><path d="M12 1.3 L12.6 4.6" stroke="#d4d4cc" stroke-width="1.8"/><circle cx="10.2" cy="1.4" r="1.3" fill="#3a3030"/><path d="M10.4 3.4 L12.6 3 L13.3 15.2 H11.6 Z" fill="#3a3434"/><path d="M8 6 L10.6 5.4 L11.8 15 L7 15.3 L5.4 13.6 Z" fill="#e02828"/><path d="M0.6 15 H3 M5.6 15.2 H8" stroke="#444" stroke-width="1"/></svg>
<div class="t gray" style="left:124px;top:255.4px;">12:00</div>
<div class="t gray" style="left:174px;top:255.4px;">0/0</div>
<div class="t gray" style="left:224px;top:255.4px;">Sodobni ples</div>
<div class="a rowg" style="left:0px;top:274px;width:375px;height:20px;"></div>
<svg class="a" style="left:76px;top:276px" width="16" height="16" viewBox="0 0 16 16"><path d="M5.6 13.6 L1 14.8" stroke="#c8a8a0" stroke-width="1"/><circle cx="6.4" cy="3.2" r="1.4" fill="#9a5a3a"/><path d="M7 4.6 L9 6.5" stroke="#e8b8a0" stroke-width="1.6"/><path d="M12 1.3 L12.6 4.6" stroke="#d4d4cc" stroke-width="1.8"/><circle cx="10.2" cy="1.4" r="1.3" fill="#3a3030"/><path d="M10.4 3.4 L12.6 3 L13.3 15.2 H11.6 Z" fill="#3a3434"/><path d="M8 6 L10.6 5.4 L11.8 15 L7 15.3 L5.4 13.6 Z" fill="#e02828"/><path d="M0.6 15 H3 M5.6 15.2 H8" stroke="#444" stroke-width="1"/></svg>
<div class="t gray" style="left:124px;top:275.4px;">13:00</div>
<div class="t gray" style="left:174px;top:275.4px;">0/0</div>
<div class="t gray" style="left:224px;top:275.4px;">Sodobni ples</div>
<div class="a rowb" style="left:0px;top:294px;width:375px;height:20px;"></div>
<svg class="a" style="left:76px;top:296px" width="16" height="16" viewBox="0 0 16 16"><path d="M5.6 13.6 L1 14.8" stroke="#c8a8a0" stroke-width="1"/><circle cx="6.4" cy="3.2" r="1.4" fill="#9a5a3a"/><path d="M7 4.6 L9 6.5" stroke="#e8b8a0" stroke-width="1.6"/><path d="M12 1.3 L12.6 4.6" stroke="#d4d4cc" stroke-width="1.8"/><circle cx="10.2" cy="1.4" r="1.3" fill="#3a3030"/><path d="M10.4 3.4 L12.6 3 L13.3 15.2 H11.6 Z" fill="#3a3434"/><path d="M8 6 L10.6 5.4 L11.8 15 L7 15.3 L5.4 13.6 Z" fill="#e02828"/><path d="M0.6 15 H3 M5.6 15.2 H8" stroke="#444" stroke-width="1"/></svg>
<div class="t gray" style="left:124px;top:295.4px;">14:00</div>
<div class="t gray" style="left:174px;top:295.4px;">0/0</div>
<div class="t gray" style="left:224px;top:295.4px;">Sodobni ples</div>
<div class="a rowg" style="left:0px;top:314px;width:375px;height:40px;"></div>
<svg class="a" style="left:76px;top:326px" width="16" height="16" viewBox="0 0 16 16"><circle cx="3" cy="1.6" r="1.4" fill="#5a3838"/><path d="M2.8 3 L5.6 3 L8.2 9.6 L5.6 10.2 Z" fill="#8a4848"/><path d="M6 9.6 L8.3 9.4 L7.9 16 H5 L5.8 13.6 Z" fill="#6a7272"/><circle cx="1.8" cy="10.4" r="0.9" fill="#8aa8a0"/><path d="M8.6 4.2 L6.4 5.6" stroke="#e8b8a0" stroke-width="1"/><circle cx="9.2" cy="1.4" r="1.3" fill="#d8a040"/><path d="M8.6 3 L10.4 2.8 L15.2 8.4 L8.6 9 Z" fill="#2a9a4a"/></svg>
<div class="t gray" style="left:124px;top:315.4px;">15:00</div>
<div class="t gray" style="left:174px;top:315.4px;">0/0</div>
<div class="t gray" style="left:224px;top:315.4px;">Popping ples</div>
<div class="t gray" style="left:224px;top:331.4px;">Zaposleni 5</div>
<div class="a rowb" style="left:0px;top:354px;width:375px;height:40px;"></div>
<svg class="a" style="left:76px;top:366px" width="16" height="16" viewBox="0 0 16 16"><circle cx="3" cy="1.6" r="1.4" fill="#5a3838"/><path d="M2.8 3 L5.6 3 L8.2 9.6 L5.6 10.2 Z" fill="#8a4848"/><path d="M6 9.6 L8.3 9.4 L7.9 16 H5 L5.8 13.6 Z" fill="#6a7272"/><circle cx="1.8" cy="10.4" r="0.9" fill="#8aa8a0"/><path d="M8.6 4.2 L6.4 5.6" stroke="#e8b8a0" stroke-width="1"/><circle cx="9.2" cy="1.4" r="1.3" fill="#d8a040"/><path d="M8.6 3 L10.4 2.8 L15.2 8.4 L8.6 9 Z" fill="#2a9a4a"/></svg>
<div class="t gray" style="left:124px;top:355.4px;">16:00</div>
<div class="t gray" style="left:174px;top:355.4px;">0/0</div>
<div class="t gray" style="left:224px;top:355.4px;">Popping ples</div>
<div class="t gray" style="left:224px;top:371.4px;">Zaposleni 5</div>
<div class="a rowg" style="left:0px;top:394px;width:375px;height:40px;"></div>
<svg class="a" style="left:76px;top:406px" width="16" height="16" viewBox="0 0 16 16"><circle cx="3" cy="1.6" r="1.4" fill="#5a3838"/><path d="M2.8 3 L5.6 3 L8.2 9.6 L5.6 10.2 Z" fill="#8a4848"/><path d="M6 9.6 L8.3 9.4 L7.9 16 H5 L5.8 13.6 Z" fill="#6a7272"/><circle cx="1.8" cy="10.4" r="0.9" fill="#8aa8a0"/><path d="M8.6 4.2 L6.4 5.6" stroke="#e8b8a0" stroke-width="1"/><circle cx="9.2" cy="1.4" r="1.3" fill="#d8a040"/><path d="M8.6 3 L10.4 2.8 L15.2 8.4 L8.6 9 Z" fill="#2a9a4a"/></svg>
<div class="t gray" style="left:124px;top:395.4px;">17:00</div>
<div class="t gray" style="left:174px;top:395.4px;">0/0</div>
<div class="t gray" style="left:224px;top:395.4px;">Popping ples</div>
<div class="t gray" style="left:224px;top:411.4px;">Zaposleni 5</div>
<div class="a rowb" style="left:0px;top:434px;width:375px;height:20px;"></div>
<div class="a yel" style="left:124px;top:434px;width:251px;height:20px;"></div>
<svg class="a" style="left:74px;top:435px" width="20" height="18" viewBox="0 0 20 18"><path d="M6 5 L9.6 1" stroke="#3aa888" stroke-width="1.7"/><circle cx="4.7" cy="2.6" r="1.6" fill="#f0b070"/><path d="M2.6 4.6 H6.4 L6.2 10.6 H0.6 Z" fill="#3aa888"/><path d="M4 10.4 L2.7 17.4 M5.8 10.4 L7.9 17.4" stroke="#2c4258" stroke-width="2"/><path d="M10.6 1 L13.2 5.6 M19.4 1 L16.9 5.6" stroke="#d8503a" stroke-width="1.7"/><circle cx="15" cy="2.6" r="1.6" fill="#f0b880"/><path d="M13 4.6 H17.4 L17.2 10.6 H13.2 Z" fill="#d8503a"/><path d="M14.2 10.4 L11.8 17.4 M16.4 10.4 L17.4 17.4" stroke="#2c4258" stroke-width="2"/></svg>
<div class="t blk" style="left:124px;top:435.4px;">18:00</div>
<div class="t blk" style="left:174px;top:435.4px;">0/1</div>
<div class="t blk" style="left:224px;top:435.4px;">Hip-hop plesi</div>
<div class="a rowg" style="left:0px;top:454px;width:375px;height:20px;"></div>
<svg class="a" style="left:74px;top:455px" width="20" height="18" viewBox="0 0 20 18"><path d="M6 5 L9.6 1" stroke="#3aa888" stroke-width="1.7"/><circle cx="4.7" cy="2.6" r="1.6" fill="#f0b070"/><path d="M2.6 4.6 H6.4 L6.2 10.6 H0.6 Z" fill="#3aa888"/><path d="M4 10.4 L2.7 17.4 M5.8 10.4 L7.9 17.4" stroke="#2c4258" stroke-width="2"/><path d="M10.6 1 L13.2 5.6 M19.4 1 L16.9 5.6" stroke="#d8503a" stroke-width="1.7"/><circle cx="15" cy="2.6" r="1.6" fill="#f0b880"/><path d="M13 4.6 H17.4 L17.2 10.6 H13.2 Z" fill="#d8503a"/><path d="M14.2 10.4 L11.8 17.4 M16.4 10.4 L17.4 17.4" stroke="#2c4258" stroke-width="2"/></svg>
<div class="t gray" style="left:124px;top:455.4px;">19:00</div>
<div class="t gray" style="left:174px;top:455.4px;">0/0</div>
<div class="t gray" style="left:224px;top:455.4px;">Hip-hop plesi</div>
<div class="a rowb" style="left:0px;top:474px;width:375px;height:20px;"></div>
<svg class="a" style="left:74px;top:475px" width="20" height="18" viewBox="0 0 20 18"><path d="M6 5 L9.6 1" stroke="#3aa888" stroke-width="1.7"/><circle cx="4.7" cy="2.6" r="1.6" fill="#f0b070"/><path d="M2.6 4.6 H6.4 L6.2 10.6 H0.6 Z" fill="#3aa888"/><path d="M4 10.4 L2.7 17.4 M5.8 10.4 L7.9 17.4" stroke="#2c4258" stroke-width="2"/><path d="M10.6 1 L13.2 5.6 M19.4 1 L16.9 5.6" stroke="#d8503a" stroke-width="1.7"/><circle cx="15" cy="2.6" r="1.6" fill="#f0b880"/><path d="M13 4.6 H17.4 L17.2 10.6 H13.2 Z" fill="#d8503a"/><path d="M14.2 10.4 L11.8 17.4 M16.4 10.4 L17.4 17.4" stroke="#2c4258" stroke-width="2"/></svg>
<div class="t gray" style="left:124px;top:475.4px;">20:00</div>
<div class="t gray" style="left:174px;top:475.4px;">0/0</div>
<div class="t gray" style="left:224px;top:475.4px;">Hip-hop plesi</div>
<div class="a rowg" style="left:0px;top:494px;width:375px;height:34px;"></div>
<div class="a grp" style="left:34px;top:494px;width:341px;height:34px;"></div>
<div class="t wh" style="left:34px;top:495.4px;letter-spacing:0.45px">23.08.2024</div>
<div class="t wh" style="left:224px;top:495.4px;">Petek</div>
<svg class="a" style="left:8px;top:501.5px" width="18" height="18" viewBox="0 0 18 18"><circle cx="9" cy="9" r="7.3" fill="none" stroke="#3c3c3c" stroke-width="1.3"/><path d="M6 6 L11.6 11.6 M11.8 7 V11.8 H7" fill="none" stroke="#333" stroke-width="1.4"/></svg>
<div class="a rowb" style="left:0px;top:528px;width:375px;height:60px;"></div>
<svg class="a" style="left:76px;top:550px" width="16" height="16" viewBox="0 0 16 16"><ellipse cx="7" cy="2.3" rx="1.7" ry="2" fill="#4a3028"/><path d="M8.3 4.6 L9.4 1" stroke="#f0c0a8" stroke-width="0.9"/><rect x="5.4" y="4.4" width="3.2" height="1.7" fill="#e84848"/><rect x="5.9" y="6" width="2.4" height="3.2" fill="#e8a888"/><rect x="4.8" y="9" width="4.4" height="5.8" rx="1.6" fill="#f85060"/><rect x="6" y="14.6" width="2" height="1.4" fill="#f0c8b8"/></svg>
<div class="t gray" style="left:124px;top:529.4px;">07:00</div>
<div class="t gray" style="left:174px;top:529.4px;">0/0</div>
<div class="t gray" style="left:224px;top:529.4px;">Barbie ples</div>
<div class="t gray" style="left:224px;top:545.4px;">Zaposleni 1</div>
<div class="t gray" style="left:224px;top:561.4px;">Skupina: Children</div>
<div class="a rowg" style="left:0px;top:588px;width:375px;height:60px;"></div>
<svg class="a" style="left:76px;top:610px" width="16" height="16" viewBox="0 0 16 16"><ellipse cx="7" cy="2.3" rx="1.7" ry="2" fill="#4a3028"/><path d="M8.3 4.6 L9.4 1" stroke="#f0c0a8" stroke-width="0.9"/><rect x="5.4" y="4.4" width="3.2" height="1.7" fill="#e84848"/><rect x="5.9" y="6" width="2.4" height="3.2" fill="#e8a888"/><rect x="4.8" y="9" width="4.4" height="5.8" rx="1.6" fill="#f85060"/><rect x="6" y="14.6" width="2" height="1.4" fill="#f0c8b8"/></svg>
<div class="t gray" style="left:124px;top:589.4px;">08:00</div>
<div class="t gray" style="left:174px;top:589.4px;">0/0</div>
<div class="t gray" style="left:224px;top:589.4px;">Barbie ples</div>
<div class="t gray" style="left:224px;top:605.4px;">Zaposleni 1</div>
<div class="t gray" style="left:224px;top:621.4px;">Skupina: Children</div>
</div></div>
<svg class="a" style="left:782px;top:175px" width="8" height="4" viewBox="0 0 8 4"><path d="M0 4 L4 0 L8 4 Z" fill="#909090"/></svg>
<div class="a " style="left:781px;top:188px;width:10px;height:416px;background:#b9b9b9"></div>
<svg class="a" style="left:782px;top:850px" width="7" height="4" viewBox="0 0 7 4"><path d="M0 0 H7 L3.5 4 Z" fill="#808080"/></svg>
<div class="a " style="left:401px;top:864px;width:394px;height:20px;background:#fff"></div>
<div class="a " style="left:401px;top:863px;width:375px;height:1px;background:#c6c6c6"></div>
<svg class="a" style="left:409px;top:871px" width="4" height="7" viewBox="0 0 4 7"><path d="M4 0 V7 L0 3.5 Z" fill="#808080"/></svg>
<svg class="a" style="left:762px;top:871px" width="4" height="7" viewBox="0 0 4 7"><path d="M0 0 V7 L4 3.5 Z" fill="#808080"/></svg>
<div class="a " style="left:421px;top:869px;width:301px;height:10px;background:#b9b9b9"></div>
<div class="a " style="left:804px;top:165px;width:397px;height:720px;background:#fff;border:1px solid #c6c6c6"></div>
<div class="a " style="left:804px;top:165px;width:377px;height:1px;background:#d4d4d4"></div>
<div class="a " style="left:804px;top:166px;width:377px;height:2px;background:#c0c0c0"></div>
<div class="a " style="left:804px;top:166px;width:2px;height:68px;background:#c0c0c0"></div>
<div class="a " style="left:804px;top:234px;width:1px;height:630px;background:#c6c6c6"></div>
<div class="a " style="left:1180px;top:166px;width:1px;height:698px;background:#c6c6c6"></div>
<div class="a hdr" style="left:806px;top:168px;width:374px;height:31px;"></div>
<div class="a gl" style="left:806px;top:199px;width:374px;height:1px;"></div>
<div class="a hdr" style="left:806px;top:200px;width:374px;height:33px;"></div>
<div class="a gl" style="left:806px;top:233px;width:374px;height:1px;"></div>
<div class="a gl" style="left:928px;top:200px;width:1px;height:33px;"></div>
<div class="a gl" style="left:978px;top:200px;width:1px;height:33px;"></div>
<div class="a gl" style="left:1028px;top:200px;width:1px;height:33px;"></div>
<div class="t" style="left:910px;width:200px;top:176.5px;text-align:center;color:#222">2. Velika dvorana</div>
<div class="t " style="left:834px;top:210px;">Datum</div>
<svg class="a" style="left:908px;top:214px" width="10" height="7" viewBox="0 0 10 7"><path d="M0 6 L5 0.5 L10 6 Z" fill="#555"/></svg>
<div class="t" style="left:929px;width:49px;top:210px;text-align:center">Čas</div>
<div class="t" style="left:979px;width:49px;top:210px;text-align:center">Ljudje</div>
<div class="t" style="left:1029px;width:151px;top:210px;text-align:right;padding-right:36px">Posneti</div>
<div class="a" style="left:805px;top:234px;width:375px;height:629px;overflow:hidden"><div class="a" style="left:0;top:-1px;width:375px;height:640px;transform:translateY(0.6px)">
<div class="a rowb" style="left:0px;top:0px;width:375px;height:34px;"></div>
<div class="a grp" style="left:34px;top:0px;width:341px;height:34px;"></div>
<div class="t cy" style="left:34px;top:1.4px;letter-spacing:0.45px">22.08.2024</div>
<div class="t cy" style="left:224px;top:1.4px;">Četrtek</div>
<svg class="a" style="left:8px;top:7.5px" width="18" height="18" viewBox="0 0 18 18"><circle cx="9" cy="9" r="7.3" fill="none" stroke="#3c3c3c" stroke-width="1.3"/><path d="M6 6 L11.6 11.6 M11.8 7 V11.8 H7" fill="none" stroke="#333" stroke-width="1.4"/></svg>
<div class="a rowg" style="left:0px;top:34px;width:375px;height:20px;"></div>
<svg class="a" style="left:75px;top:36px" width="18" height="16" viewBox="0 0 18 16"><path d="M13 4.6 L16.6 2.8" stroke="#e8c8b0" stroke-width="1.1"/><circle cx="8.3" cy="3" r="1.5" fill="#8a5030"/><circle cx="11" cy="1.5" r="1.3" fill="#b08050"/><path d="M9 4.6 L11 6" stroke="#e8b8a0" stroke-width="1.6"/><path d="M11.4 4.4 L13.6 4 L14.4 15.2 H12.6 Z" fill="#3a3030"/><path d="M0.8 15.2 Q7 12 9.4 6 L11.2 5.6 L12.8 15.2 Z" fill="#2a9ad8"/></svg>
<div class="t gray" style="left:124px;top:35.4px;">08:00</div>
<div class="t gray" style="left:174px;top:35.4px;">0/0</div>
<div class="t gray" style="left:224px;top:35.4px;">Krump ples</div>
<div class="a rowb" style="left:0px;top:54px;width:375px;height:20px;"></div>
<svg class="a" style="left:75px;top:56px" width="18" height="16" viewBox="0 0 18 16"><path d="M13 4.6 L16.6 2.8" stroke="#e8c8b0" stroke-width="1.1"/><circle cx="8.3" cy="3" r="1.5" fill="#8a5030"/><circle cx="11" cy="1.5" r="1.3" fill="#b08050"/><path d="M9 4.6 L11 6" stroke="#e8b8a0" stroke-width="1.6"/><path d="M11.4 4.4 L13.6 4 L14.4 15.2 H12.6 Z" fill="#3a3030"/><path d="M0.8 15.2 Q7 12 9.4 6 L11.2 5.6 L12.8 15.2 Z" fill="#2a9ad8"/></svg>
<div class="t gray" style="left:124px;top:55.4px;">09:00</div>
<div class="t gray" style="left:174px;top:55.4px;">0/0</div>
<div class="t gray" style="left:224px;top:55.4px;">Krump ples</div>
<div class="a rowg" style="left:0px;top:74px;width:375px;height:20px;"></div>
<div class="a yel" style="left:124px;top:74px;width:251px;height:20px;"></div>
<svg class="a" style="left:75px;top:76px" width="18" height="16" viewBox="0 0 18 16"><path d="M13 4.6 L16.6 2.8" stroke="#e8c8b0" stroke-width="1.1"/><circle cx="8.3" cy="3" r="1.5" fill="#8a5030"/><circle cx="11" cy="1.5" r="1.3" fill="#b08050"/><path d="M9 4.6 L11 6" stroke="#e8b8a0" stroke-width="1.6"/><path d="M11.4 4.4 L13.6 4 L14.4 15.2 H12.6 Z" fill="#3a3030"/><path d="M0.8 15.2 Q7 12 9.4 6 L11.2 5.6 L12.8 15.2 Z" fill="#2a9ad8"/></svg>
<div class="t blk" style="left:124px;top:75.4px;">10:00</div>
<div class="t blk" style="left:174px;top:75.4px;">0/2</div>
<div class="t blk" style="left:224px;top:75.4px;">Krump ples</div>
<div class="a rowb" style="left:0px;top:94px;width:375px;height:20px;"></div>
<svg class="a" style="left:75px;top:96px" width="18" height="16" viewBox="0 0 18 16"><path d="M13 4.6 L16.6 2.8" stroke="#e8c8b0" stroke-width="1.1"/><circle cx="8.3" cy="3" r="1.5" fill="#8a5030"/><circle cx="11" cy="1.5" r="1.3" fill="#b08050"/><path d="M9 4.6 L11 6" stroke="#e8b8a0" stroke-width="1.6"/><path d="M11.4 4.4 L13.6 4 L14.4 15.2 H12.6 Z" fill="#3a3030"/><path d="M0.8 15.2 Q7 12 9.4 6 L11.2 5.6 L12.8 15.2 Z" fill="#2a9ad8"/></svg>
<div class="t gray" style="left:124px;top:95.4px;">11:00</div>
<div class="t gray" style="left:174px;top:95.4px;">0/0</div>
<div class="t gray" style="left:224px;top:95.4px;">Krump ples</div>
<div class="a rowg" style="left:0px;top:114px;width:375px;height:20px;"></div>
<svg class="a" style="left:75px;top:116px" width="18" height="16" viewBox="0 0 18 16"><path d="M13 4.6 L16.6 2.8" stroke="#e8c8b0" stroke-width="1.1"/><circle cx="8.3" cy="3" r="1.5" fill="#8a5030"/><circle cx="11" cy="1.5" r="1.3" fill="#b08050"/><path d="M9 4.6 L11 6" stroke="#e8b8a0" stroke-width="1.6"/><path d="M11.4 4.4 L13.6 4 L14.4 15.2 H12.6 Z" fill="#3a3030"/><path d="M0.8 15.2 Q7 12 9.4 6 L11.2 5.6 L12.8 15.2 Z" fill="#2a9ad8"/></svg>
<div class="t gray" style="left:124px;top:115.4px;">12:00</div>
<div class="t gray" style="left:174px;top:115.4px;">0/0</div>
<div class="t gray" style="left:224px;top:115.4px;">Krump ples</div>
<div class="a rowb" style="left:0px;top:134px;width:375px;height:60px;"></div>
<svg class="a" style="left:76px;top:155px" width="16" height="18" viewBox="0 0 16 18"><ellipse cx="4.9" cy="1.9" rx="2.3" ry="1.5" transform="rotate(-20 4.9 1.9)" fill="#d82030"/><path d="M5.6 3.4 L7 7.6" stroke="#f8ecec" stroke-width="1.2"/><ellipse cx="8.7" cy="7" rx="1.1" ry="2.4" fill="#3a1a1a"/><path d="M6.4 7.6 L8 7 L8.6 11.6 H6 Z" fill="#d02030"/><path d="M2.6 17 Q2 12 6 11 H8.6 Q13 13 14.6 15.6 Q10 17.6 2.6 17 Z" fill="#cc1a28"/></svg>
<div class="t gray" style="left:124px;top:135.4px;">13:00</div>
<div class="t gray" style="left:174px;top:135.4px;">0/0</div>
<div class="t gray" style="left:224px;top:135.4px;">Hišni ples</div>
<div class="t gray" style="left:224px;top:151.4px;">Zaposlen 2</div>
<div class="t gray" style="left:224px;top:167.4px;">Skupina: Children</div>
<div class="a rowg" style="left:0px;top:194px;width:375px;height:60px;"></div>
<svg class="a" style="left:76px;top:215px" width="16" height="18" viewBox="0 0 16 18"><ellipse cx="4.9" cy="1.9" rx="2.3" ry="1.5" transform="rotate(-20 4.9 1.9)" fill="#d82030"/><path d="M5.6 3.4 L7 7.6" stroke="#f8ecec" stroke-width="1.2"/><ellipse cx="8.7" cy="7" rx="1.1" ry="2.4" fill="#3a1a1a"/><path d="M6.4 7.6 L8 7 L8.6 11.6 H6 Z" fill="#d02030"/><path d="M2.6 17 Q2 12 6 11 H8.6 Q13 13 14.6 15.6 Q10 17.6 2.6 17 Z" fill="#cc1a28"/></svg>
<div class="t gray" style="left:124px;top:195.4px;">14:00</div>
<div class="t gray" style="left:174px;top:195.4px;">0/0</div>
<div class="t gray" style="left:224px;top:195.4px;">Hišni ples</div>
<div class="t gray" style="left:224px;top:211.4px;">Zaposlen 2</div>
<div class="t gray" style="left:224px;top:227.4px;">Skupina: Children</div>
<div class="a rowb" style="left:0px;top:254px;width:375px;height:60px;"></div>
<div class="a yel" style="left:124px;top:254px;width:251px;height:60px;"></div>
<svg class="a" style="left:76px;top:275px" width="16" height="18" viewBox="0 0 16 18"><ellipse cx="4.9" cy="1.9" rx="2.3" ry="1.5" transform="rotate(-20 4.9 1.9)" fill="#d82030"/><path d="M5.6 3.4 L7 7.6" stroke="#f8ecec" stroke-width="1.2"/><ellipse cx="8.7" cy="7" rx="1.1" ry="2.4" fill="#3a1a1a"/><path d="M6.4 7.6 L8 7 L8.6 11.6 H6 Z" fill="#d02030"/><path d="M2.6 17 Q2 12 6 11 H8.6 Q13 13 14.6 15.6 Q10 17.6 2.6 17 Z" fill="#cc1a28"/></svg>
<div class="t red" style="left:124px;top:255.4px;">15:00</div>
<div class="t red" style="left:174px;top:255.4px;">0/1</div>
<div class="t red" style="left:224px;top:255.4px;">Hišni ples</div>
<div class="t red" style="left:224px;top:271.4px;">Zaposlen 2</div>
<div class="t red" style="left:224px;top:287.4px;">Skupina: Children</div>
<div class="a rowg" style="left:0px;top:314px;width:375px;height:60px;"></div>
<svg class="a" style="left:76px;top:335px" width="16" height="18" viewBox="0 0 16 18"><ellipse cx="4.9" cy="1.9" rx="2.3" ry="1.5" transform="rotate(-20 4.9 1.9)" fill="#d82030"/><path d="M5.6 3.4 L7 7.6" stroke="#f8ecec" stroke-width="1.2"/><ellipse cx="8.7" cy="7" rx="1.1" ry="2.4" fill="#3a1a1a"/><path d="M6.4 7.6 L8 7 L8.6 11.6 H6 Z" fill="#d02030"/><path d="M2.6 17 Q2 12 6 11 H8.6 Q13 13 14.6 15.6 Q10 17.6 2.6 17 Z" fill="#cc1a28"/></svg>
<div class="t gray" style="left:124px;top:315.4px;">16:00</div>
<div class="t gray" style="left:174px;top:315.4px;">0/0</div>
<div class="t gray" style="left:224px;top:315.4px;">Hišni ples</div>
<div class="t gray" style="left:224px;top:331.4px;">Zaposlen 2</div>
<div class="t gray" style="left:224px;top:347.4px;">Skupina: Children</div>
<div class="a rowb" style="left:0px;top:374px;width:375px;height:60px;"></div>
<svg class="a" style="left:76px;top:395px" width="16" height="18" viewBox="0 0 16 18"><ellipse cx="4.9" cy="1.9" rx="2.3" ry="1.5" transform="rotate(-20 4.9 1.9)" fill="#d82030"/><path d="M5.6 3.4 L7 7.6" stroke="#f8ecec" stroke-width="1.2"/><ellipse cx="8.7" cy="7" rx="1.1" ry="2.4" fill="#3a1a1a"/><path d="M6.4 7.6 L8 7 L8.6 11.6 H6 Z" fill="#d02030"/><path d="M2.6 17 Q2 12 6 11 H8.6 Q13 13 14.6 15.6 Q10 17.6 2.6 17 Z" fill="#cc1a28"/></svg>
<div class="t gray" style="left:124px;top:375.4px;">17:00</div>
<div class="t gray" style="left:174px;top:375.4px;">0/0</div>
<div class="t gray" style="left:224px;top:375.4px;">Hišni ples</div>
<div class="t gray" style="left:224px;top:391.4px;">Zaposlen 2</div>
<div class="t gray" style="left:224px;top:407.4px;">Skupina: Children</div>
<div class="a rowg" style="left:0px;top:434px;width:375px;height:20px;"></div>
<div class="a yel" style="left:124px;top:434px;width:251px;height:20px;"></div>
<svg class="a" style="left:74px;top:434px" width="20" height="20" viewBox="0 0 20 20"><path d="M6.6 6.9 L1.8 3 M12.8 6.9 L18 3.8" stroke="#68b83c" stroke-width="1.9"/><circle cx="1.4" cy="2.5" r="1" fill="#f4d090"/><circle cx="18.7" cy="3.2" r="1" fill="#f4d090"/><ellipse cx="9.6" cy="2.6" rx="1.9" ry="2.2" fill="#e8503c"/><ellipse cx="9.5" cy="5.3" rx="1.2" ry="1.5" fill="#f8c040"/><path d="M6.3 6.4 H13.2 L14 12.6 H5.8 Z" fill="#e858a8"/><path d="M9 7 H10.5 L11.3 12.6 H8.2 Z" fill="#58b838"/><rect x="4.2" y="12.6" width="11" height="6.8" rx="1.5" fill="#d8922c"/><rect x="7.6" y="13.8" width="4.6" height="4.2" fill="#b88a62" opacity="0.8"/></svg>
<div class="t blk" style="left:124px;top:435.4px;">18:00</div>
<div class="t blk" style="left:174px;top:435.4px;">0/1</div>
<div class="t blk" style="left:224px;top:435.4px;">Vozeč ples</div>
<div class="a rowb" style="left:0px;top:454px;width:375px;height:20px;"></div>
<svg class="a" style="left:74px;top:454px" width="20" height="20" viewBox="0 0 20 20"><path d="M6.6 6.9 L1.8 3 M12.8 6.9 L18 3.8" stroke="#68b83c" stroke-width="1.9"/><circle cx="1.4" cy="2.5" r="1" fill="#f4d090"/><circle cx="18.7" cy="3.2" r="1" fill="#f4d090"/><ellipse cx="9.6" cy="2.6" rx="1.9" ry="2.2" fill="#e8503c"/><ellipse cx="9.5" cy="5.3" rx="1.2" ry="1.5" fill="#f8c040"/><path d="M6.3 6.4 H13.2 L14 12.6 H5.8 Z" fill="#e858a8"/><path d="M9 7 H10.5 L11.3 12.6 H8.2 Z" fill="#58b838"/><rect x="4.2" y="12.6" width="11" height="6.8" rx="1.5" fill="#d8922c"/><rect x="7.6" y="13.8" width="4.6" height="4.2" fill="#b88a62" opacity="0.8"/></svg>
<div class="t gray" style="left:124px;top:455.4px;">19:00</div>
<div class="t gray" style="left:174px;top:455.4px;">0/0</div>
<div class="t gray" style="left:224px;top:455.4px;">Vozeč ples</div>
<div class="a rowg" style="left:0px;top:474px;width:375px;height:20px;"></div>
<svg class="a" style="left:74px;top:474px" width="20" height="20" viewBox="0 0 20 20"><path d="M6.6 6.9 L1.8 3 M12.8 6.9 L18 3.8" stroke="#68b83c" stroke-width="1.9"/><circle cx="1.4" cy="2.5" r="1" fill="#f4d090"/><circle cx="18.7" cy="3.2" r="1" fill="#f4d090"/><ellipse cx="9.6" cy="2.6" rx="1.9" ry="2.2" fill="#e8503c"/><ellipse cx="9.5" cy="5.3" rx="1.2" ry="1.5" fill="#f8c040"/><path d="M6.3 6.4 H13.2 L14 12.6 H5.8 Z" fill="#e858a8"/><path d="M9 7 H10.5 L11.3 12.6 H8.2 Z" fill="#58b838"/><rect x="4.2" y="12.6" width="11" height="6.8" rx="1.5" fill="#d8922c"/><rect x="7.6" y="13.8" width="4.6" height="4.2" fill="#b88a62" opacity="0.8"/></svg>
<div class="t gray" style="left:124px;top:475.4px;">20:00</div>
<div class="t gray" style="left:174px;top:475.4px;">0/0</div>
<div class="t gray" style="left:224px;top:475.4px;">Vozeč ples</div>
<div class="a rowb" style="left:0px;top:494px;width:375px;height:20px;"></div>
<svg class="a" style="left:74px;top:494px" width="20" height="20" viewBox="0 0 20 20"><path d="M6.6 6.9 L1.8 3 M12.8 6.9 L18 3.8" stroke="#68b83c" stroke-width="1.9"/><circle cx="1.4" cy="2.5" r="1" fill="#f4d090"/><circle cx="18.7" cy="3.2" r="1" fill="#f4d090"/><ellipse cx="9.6" cy="2.6" rx="1.9" ry="2.2" fill="#e8503c"/><ellipse cx="9.5" cy="5.3" rx="1.2" ry="1.5" fill="#f8c040"/><path d="M6.3 6.4 H13.2 L14 12.6 H5.8 Z" fill="#e858a8"/><path d="M9 7 H10.5 L11.3 12.6 H8.2 Z" fill="#58b838"/><rect x="4.2" y="12.6" width="11" height="6.8" rx="1.5" fill="#d8922c"/><rect x="7.6" y="13.8" width="4.6" height="4.2" fill="#b88a62" opacity="0.8"/></svg>
<div class="t gray" style="left:124px;top:495.4px;">21:00</div>
<div class="t gray" style="left:174px;top:495.4px;">0/0</div>
<div class="t gray" style="left:224px;top:495.4px;">Vozeč ples</div>
<div class="a rowg" style="left:0px;top:514px;width:375px;height:20px;"></div>
<svg class="a" style="left:74px;top:514px" width="20" height="20" viewBox="0 0 20 20"><path d="M6.6 6.9 L1.8 3 M12.8 6.9 L18 3.8" stroke="#68b83c" stroke-width="1.9"/><circle cx="1.4" cy="2.5" r="1" fill="#f4d090"/><circle cx="18.7" cy="3.2" r="1" fill="#f4d090"/><ellipse cx="9.6" cy="2.6" rx="1.9" ry="2.2" fill="#e8503c"/><ellipse cx="9.5" cy="5.3" rx="1.2" ry="1.5" fill="#f8c040"/><path d="M6.3 6.4 H13.2 L14 12.6 H5.8 Z" fill="#e858a8"/><path d="M9 7 H10.5 L11.3 12.6 H8.2 Z" fill="#58b838"/><rect x="4.2" y="12.6" width="11" height="6.8" rx="1.5" fill="#d8922c"/><rect x="7.6" y="13.8" width="4.6" height="4.2" fill="#b88a62" opacity="0.8"/></svg>
<div class="t gray" style="left:124px;top:515.4px;">22:00</div>
<div class="t gray" style="left:174px;top:515.4px;">0/0</div>
<div class="t gray" style="left:224px;top:515.4px;">Vozeč ples</div>
<div class="a rowb" style="left:0px;top:534px;width:375px;height:34px;"></div>
<div class="a grp" style="left:34px;top:534px;width:341px;height:34px;"></div>
<div class="t wh" style="left:34px;top:535.4px;letter-spacing:0.45px">23.08.2024</div>
<div class="t wh" style="left:224px;top:535.4px;">Petek</div>
<svg class="a" style="left:8px;top:541.5px" width="18" height="18" viewBox="0 0 18 18"><circle cx="9" cy="9" r="7.3" fill="none" stroke="#3c3c3c" stroke-width="1.3"/><path d="M6 6 L11.6 11.6 M11.8 7 V11.8 H7" fill="none" stroke="#333" stroke-width="1.4"/></svg>
<div class="a rowg" style="left:0px;top:568px;width:375px;height:20px;"></div>
<svg class="a" style="left:75px;top:570px" width="18" height="16" viewBox="0 0 18 16"><path d="M13 4.6 L16.6 2.8" stroke="#e8c8b0" stroke-width="1.1"/><circle cx="8.3" cy="3" r="1.5" fill="#8a5030"/><circle cx="11" cy="1.5" r="1.3" fill="#b08050"/><path d="M9 4.6 L11 6" stroke="#e8b8a0" stroke-width="1.6"/><path d="M11.4 4.4 L13.6 4 L14.4 15.2 H12.6 Z" fill="#3a3030"/><path d="M0.8 15.2 Q7 12 9.4 6 L11.2 5.6 L12.8 15.2 Z" fill="#2a9ad8"/></svg>
<div class="t gray" style="left:124px;top:569.4px;">08:00</div>
<div class="t gray" style="left:174px;top:569.4px;">0/0</div>
<div class="t gray" style="left:224px;top:569.4px;">Krump ples</div>
<div class="a rowb" style="left:0px;top:588px;width:375px;height:20px;"></div>
<svg class="a" style="left:75px;top:590px" width="18" height="16" viewBox="0 0 18 16"><path d="M13 4.6 L16.6 2.8" stroke="#e8c8b0" stroke-width="1.1"/><circle cx="8.3" cy="3" r="1.5" fill="#8a5030"/><circle cx="11" cy="1.5" r="1.3" fill="#b08050"/><path d="M9 4.6 L11 6" stroke="#e8b8a0" stroke-width="1.6"/><path d="M11.4 4.4 L13.6 4 L14.4 15.2 H12.6 Z" fill="#3a3030"/><path d="M0.8 15.2 Q7 12 9.4 6 L11.2 5.6 L12.8 15.2 Z" fill="#2a9ad8"/></svg>
<div class="t gray" style="left:124px;top:589.4px;">09:00</div>
<div class="t gray" style="left:174px;top:589.4px;">0/0</div>
<div class="t gray" style="left:224px;top:589.4px;">Krump ples</div>
<div class="a rowg" style="left:0px;top:608px;width:375px;height:20px;"></div>
<svg class="a" style="left:75px;top:610px" width="18" height="16" viewBox="0 0 18 16"><path d="M13 4.6 L16.6 2.8" stroke="#e8c8b0" stroke-width="1.1"/><circle cx="8.3" cy="3" r="1.5" fill="#8a5030"/><circle cx="11" cy="1.5" r="1.3" fill="#b08050"/><path d="M9 4.6 L11 6" stroke="#e8b8a0" stroke-width="1.6"/><path d="M11.4 4.4 L13.6 4 L14.4 15.2 H12.6 Z" fill="#3a3030"/><path d="M0.8 15.2 Q7 12 9.4 6 L11.2 5.6 L12.8 15.2 Z" fill="#2a9ad8"/></svg>
<div class="t gray" style="left:124px;top:609.4px;">10:00</div>
<div class="t gray" style="left:174px;top:609.4px;">0/0</div>
<div class="t gray" style="left:224px;top:609.4px;">Krump ples</div>
<div class="a rowb" style="left:0px;top:628px;width:375px;height:20px;"></div>
<svg class="a" style="left:75px;top:630px" width="18" height="16" viewBox="0 0 18 16"><path d="M13 4.6 L16.6 2.8" stroke="#e8c8b0" stroke-width="1.1"/><circle cx="8.3" cy="3" r="1.5" fill="#8a5030"/><circle cx="11" cy="1.5" r="1.3" fill="#b08050"/><path d="M9 4.6 L11 6" stroke="#e8b8a0" stroke-width="1.6"/><path d="M11.4 4.4 L13.6 4 L14.4 15.2 H12.6 Z" fill="#3a3030"/><path d="M0.8 15.2 Q7 12 9.4 6 L11.2 5.6 L12.8 15.2 Z" fill="#2a9ad8"/></svg>
<div class="t gray" style="left:124px;top:629.4px;">11:00</div>
<div class="t gray" style="left:174px;top:629.4px;">0/0</div>
<div class="t gray" style="left:224px;top:629.4px;">Krump ples</div>
</div></div>
<svg class="a" style="left:1187px;top:175px" width="8" height="4" viewBox="0 0 8 4"><path d="M0 4 L4 0 L8 4 Z" fill="#909090"/></svg>
<div class="a " style="left:1186px;top:188px;width:10px;height:385px;background:#b9b9b9"></div>
<svg class="a" style="left:1187px;top:850px" width="7" height="4" viewBox="0 0 7 4"><path d="M0 0 H7 L3.5 4 Z" fill="#808080"/></svg>
<div class="a " style="left:806px;top:864px;width:394px;height:20px;background:#fff"></div>
<div class="a " style="left:806px;top:863px;width:375px;height:1px;background:#c6c6c6"></div>
<svg class="a" style="left:814px;top:871px" width="4" height="7" viewBox="0 0 4 7"><path d="M4 0 V7 L0 3.5 Z" fill="#808080"/></svg>
<svg class="a" style="left:1167px;top:871px" width="4" height="7" viewBox="0 0 4 7"><path d="M0 0 V7 L4 3.5 Z" fill="#808080"/></svg>
<div class="a " style="left:826px;top:869px;width:302px;height:10px;background:#b9b9b9"></div>
<div class="a " style="left:22px;top:915px;width:1190px;height:2px;background:#c8c8c8"></div>
<div class="a " style="left:22px;top:917px;width:1190px;height:2px;background:#fff;border:1px solid #d8d8d8;border-top:none"></div>
<div class="a " style="left:22px;top:917px;width:182px;height:54px;background:#fff;border:1px solid #c8c8c8;border-top:none;border-bottom:none"></div>
<div class="a " style="left:22px;top:968px;width:182px;height:3px;background:#1e9be6"></div>
<svg class="a" style="left:40px;top:931px" width="31" height="27" viewBox="0 0 31 27"><rect x="0.75" y="0.75" width="29.5" height="25.5" rx="2" fill="#f6f8fe" stroke="#6a8cd4" stroke-width="1.5"/><path d="M0.75 6.5 V2.5 Q0.75 0.75 2.5 0.75 H28.5 Q30.25 0.75 30.25 2.5 V6.5 Z" fill="#5a88d8"/><rect x="25" y="2.2" width="2.6" height="2.6" fill="#e8483c"/></svg>
<div class="t " style="left:82px;top:937px;color:#1e9be6;letter-spacing:0.15px">Registracija</div>
<svg class="a" style="left:171px;top:938px" width="12" height="12" viewBox="0 0 12 12"><path d="M1.5 1.5 L10.5 10.5 M10.5 1.5 L1.5 10.5" stroke="#1e9be6" stroke-width="2.2"/></svg>
<svg class="a" style="left:29px;top:976px" width="19" height="19" viewBox="0 0 19 19"><circle cx="9.5" cy="9.5" r="9" fill="#3a7cc4"/><circle cx="9.5" cy="5.2" r="1.7" fill="#fff"/><rect x="8" y="7.8" width="3" height="7.4" fill="#fff"/></svg>
<div class="t " style="left:70px;top:977px;letter-spacing:0.42px">7.2.9059.10 Standard</div>
<div class="a " style="left:229px;top:976px;width:1px;height:18px;background:#c4c4c4"></div>
<svg class="a" style="left:243px;top:976px" width="16" height="19" viewBox="0 0 16 19"><path d="M1 3.5 V15.5 Q1 18 8 18 Q15 18 15 15.5 V3.5 Z" fill="#f4b46a" stroke="#c87a2c" stroke-width="0.9"/><ellipse cx="8" cy="3.5" rx="7" ry="2.6" fill="#fbe4b4" stroke="#c87a2c" stroke-width="0.9"/><path d="M1 7.5 Q8 10.5 15 7.5 M1 11.5 Q8 14.5 15 11.5" fill="none" stroke="#c87a2c" stroke-width="0.9"/></svg>
<div class="t " style="left:282px;top:977px;letter-spacing:0.4px">localhost (utf8)</div>
<div class="a " style="left:399px;top:976px;width:1px;height:18px;background:#c4c4c4"></div>
<svg class="a" style="left:413px;top:976px" width="19" height="19" viewBox="0 0 19 19"><path d="M1 18 Q1 11.5 9.5 11.5 Q18 11.5 18 18 Q9.5 20 1 18 Z" fill="#8cc84c" stroke="#5a9028" stroke-width="0.6"/><ellipse cx="9.5" cy="7" rx="4.4" ry="5.4" fill="url(#gSkin)" stroke="#c08a5a" stroke-width="0.6"/><path d="M4.8 6.5 Q4.3 0.5 9.5 0.5 Q14.7 0.5 14.2 6.5 Q12.5 3.3 9.5 3.8 Q6.5 3.3 4.8 6.5 Z" fill="#a8602c"/></svg>
<div class="t " style="left:451px;top:977px;">NIKOLAY (MAIN)</div>
<div class="a " style="left:578px;top:976px;width:1px;height:18px;background:#c4c4c4"></div>
<svg class="a" style="left:591px;top:976px" width="17" height="18" viewBox="0 0 17 18"><rect x="0.6" y="1.6" width="15.8" height="15.8" fill="#dde6fa" stroke="#4a68b8" stroke-width="1.2"/><rect x="0.6" y="0.6" width="15.8" height="3.4" fill="#d8584c"/><text x="8.5" y="15" font-family="Liberation Sans,sans-serif" font-size="9.5" font-weight="bold" text-anchor="middle" fill="#2a3a7a">31</text></svg>
<div class="t " style="left:631px;top:977px;letter-spacing:0.5px">22.08.2024</div>
<div class="a " style="left:727px;top:976px;width:1px;height:18px;background:#c4c4c4"></div>
<div class="t " style="left:762px;top:977px;letter-spacing:0.3px">00:00:00:000</div>
<div class="a " style="left:875px;top:976px;width:1px;height:18px;background:#c4c4c4"></div>
<div class="t " style="left:889px;top:977px;">11:00</div>
<div class="a " style="left:1181px;top:976px;width:1px;height:18px;background:#c4c4c4"></div>
<svg class="a" style="left:1196px;top:981px" width="12" height="12" viewBox="0 0 12 12"><rect x="10" y="0" width="2" height="2" fill="#777"/><rect x="5" y="5" width="2" height="2" fill="#777"/><rect x="10" y="5" width="2" height="2" fill="#777"/><rect x="0" y="10" width="2" height="2" fill="#777"/><rect x="5" y="10" width="2" height="2" fill="#777"/><rect x="10" y="10" width="2" height="2" fill="#777"/></svg>
</body></html>
